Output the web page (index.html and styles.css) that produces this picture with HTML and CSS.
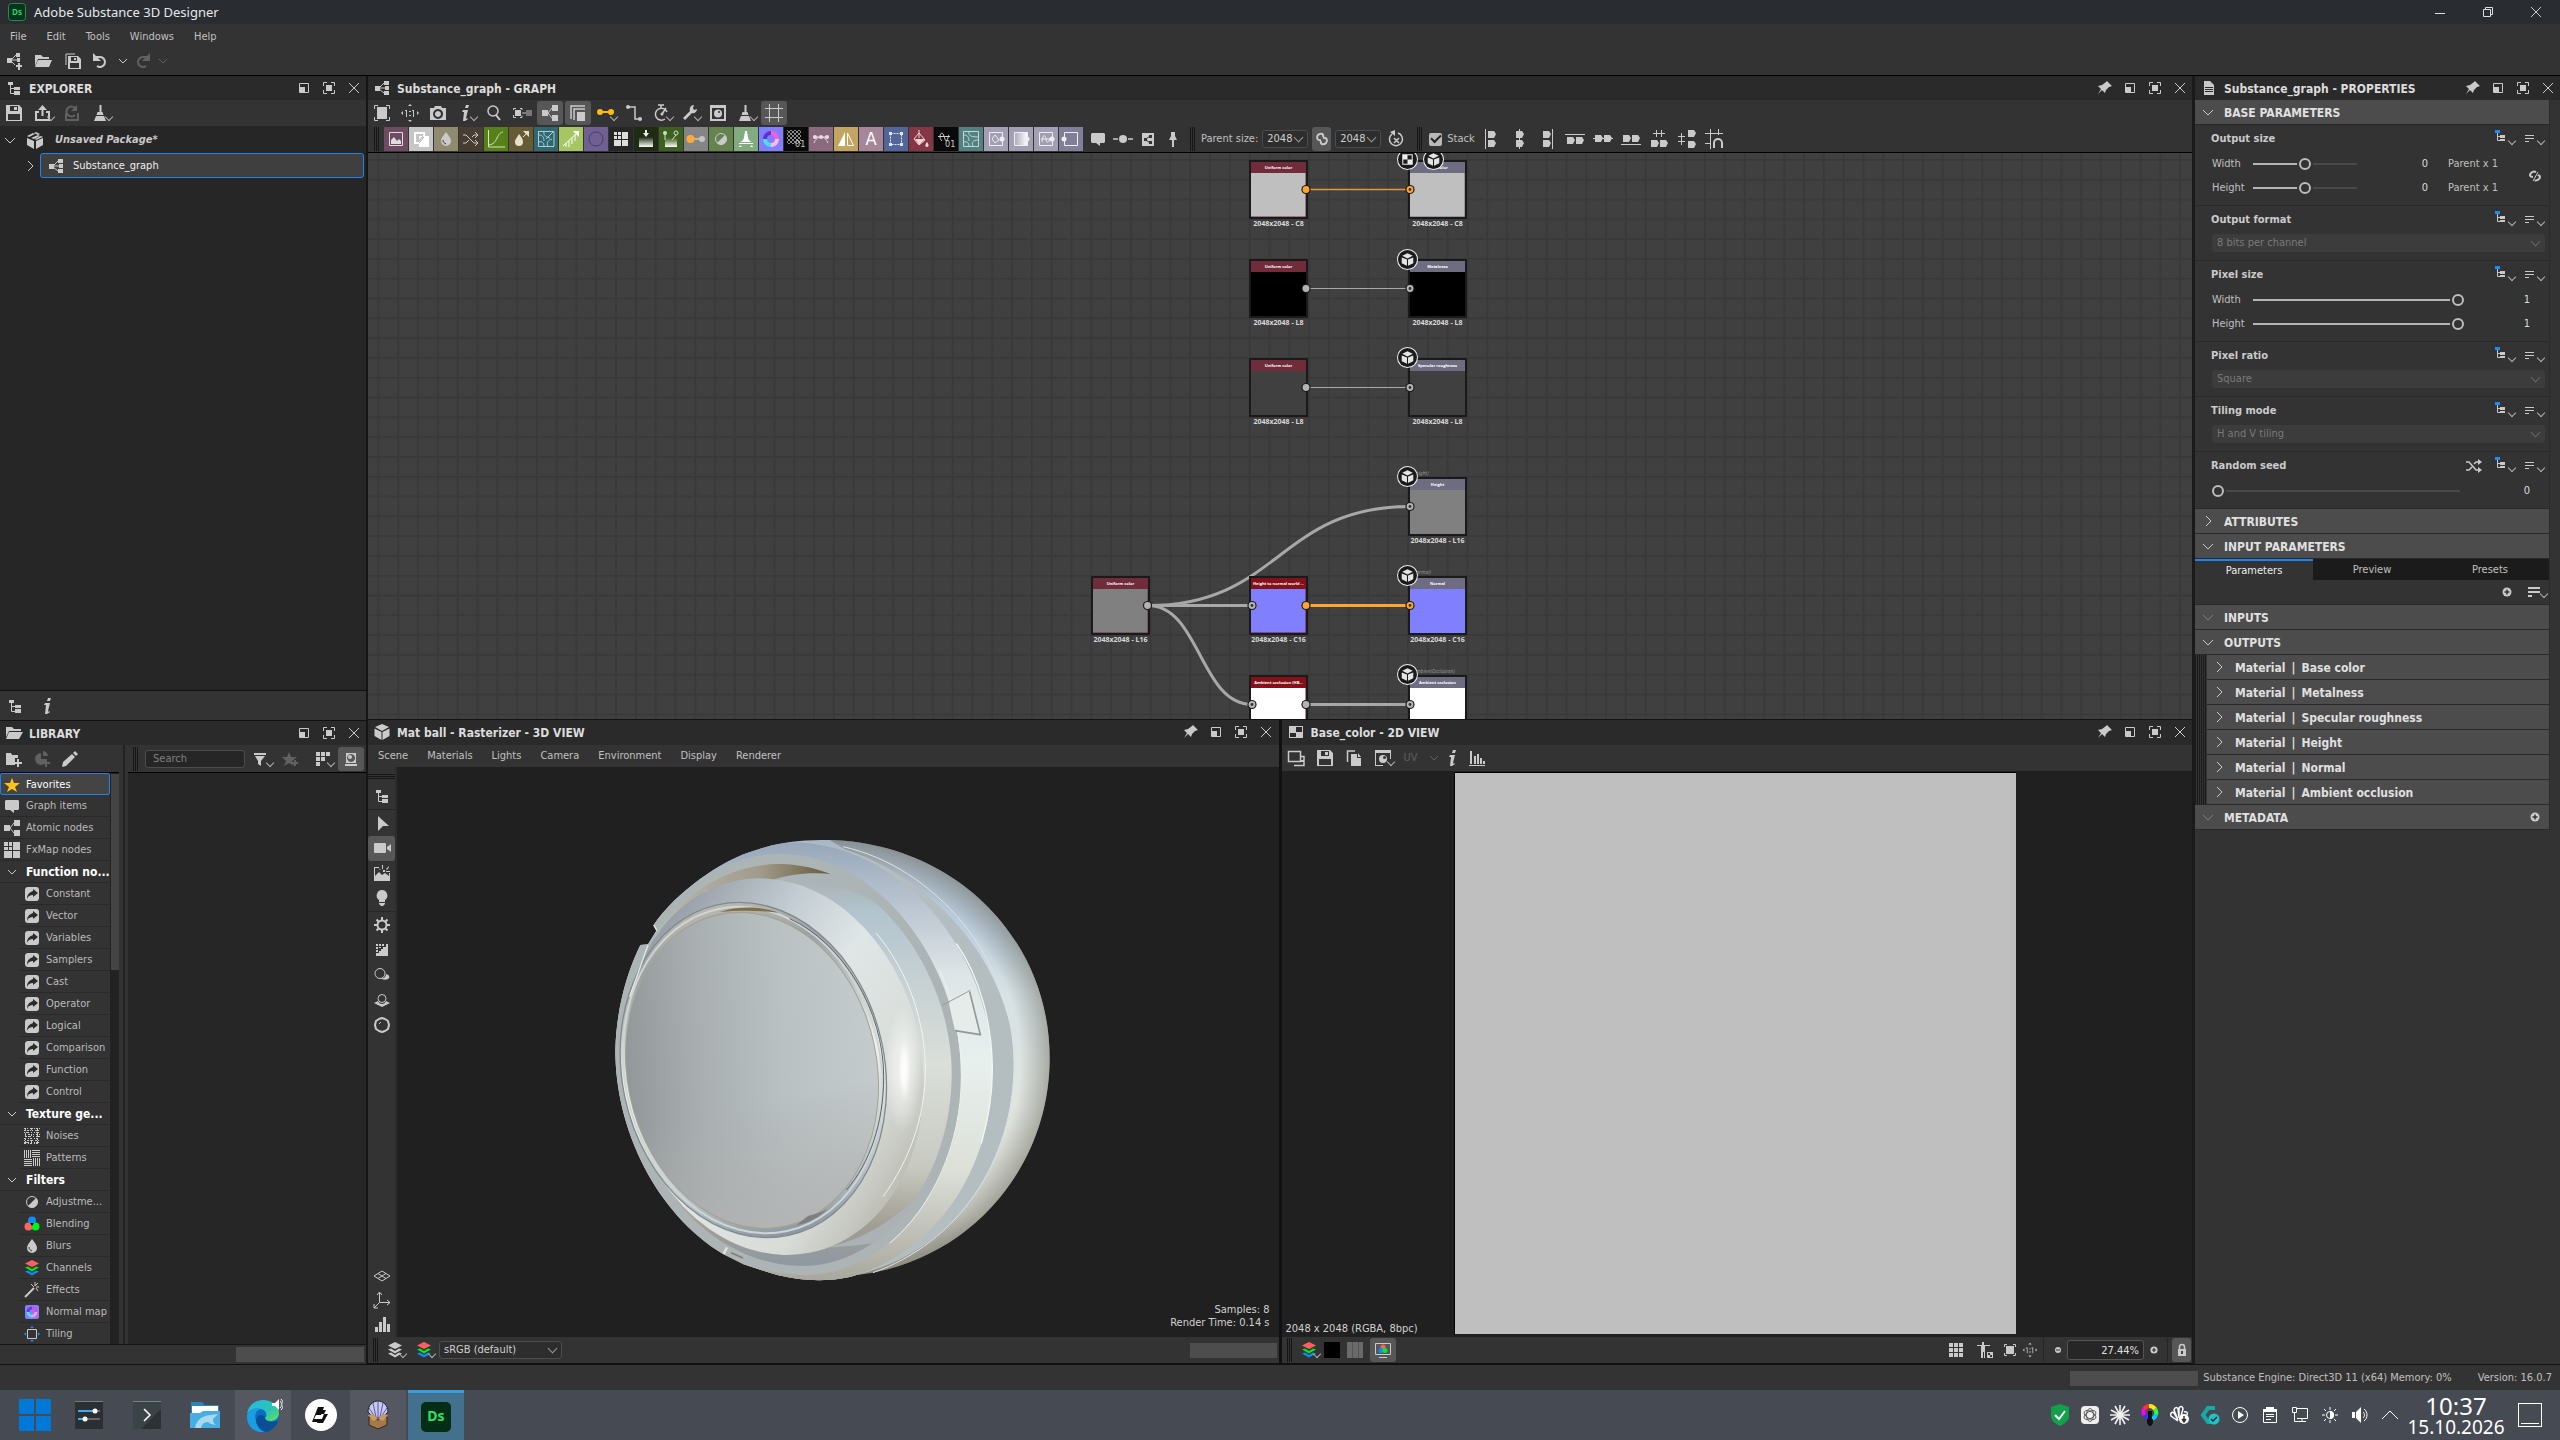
FILE: index.html
```html
<!DOCTYPE html>
<html lang="en">
<head>
<meta charset="utf-8">
<title>Adobe Substance 3D Designer</title>
<link rel="stylesheet" href="styles.css">
</head>
<body>
<svg class="sprite" aria-hidden="true">
  <defs>
    <linearGradient id="fade" x1="0" y1="0" x2="0" y2="1"><stop offset="0" stop-color="#fff" stop-opacity="0"/><stop offset="1" stop-color="#fff"/></linearGradient>
    <linearGradient id="fadeh" x1="0" y1="0" x2="1" y2="0"><stop offset="0" stop-color="#fff" stop-opacity=".1"/><stop offset="1" stop-color="#fff"/></linearGradient>
    <pattern id="check" width="4" height="4" patternUnits="userSpaceOnUse"><path fill="#8a8a8a" d="M0 0h2v2H0zM2 2h2v2H2z"/></pattern>
  </defs>
  <symbol id="graph" viewBox="0 0 20 20"><path fill="currentColor" d="M3 8h5v5H3zM12 3h5v4h-5zM13 8h4v4h-4zM12 13h5v4h-5z"/><path stroke="currentColor" fill="none" d="M7 10l5-5M7 10h6M7 11l5 4"/></symbol>
  <symbol id="graph3" viewBox="0 0 20 20"><path fill="currentColor" d="M2 7h6v6H2zM12 2h6v6h-6zM12 12h6v6h-6z"/><path stroke="currentColor" fill="none" d="M8 10l4-5M8 10l4 5"/></symbol>
  <symbol id="newgraph" viewBox="0 0 20 20"><path fill="currentColor" d="M2 7h5v5H2zM11 2h4v4h-4zM12 7h3v4h-3zM13 12h2v2h2v2h-2v3h-2v-3h-2v-2h2z"/><path stroke="currentColor" fill="none" d="M6 9l5-5M6 9h6M6 10l4 4"/></symbol>
  <symbol id="open" viewBox="0 0 20 20"><path fill="currentColor" d="M1 4h6l2 2h6v2H4l-3 7zM4 9h14l-3 7H1z"/></symbol>
  <symbol id="saveall" viewBox="0 0 20 20"><path fill="none" stroke="currentColor" d="M3 14V3h9"/><path fill="currentColor" fill-rule="evenodd" d="M5 5h10l3 3v10H5zM8 6v4h6V6zM11 7h2v2h-2zM7 12v5h9v-5z"/></symbol>
  <symbol id="save" viewBox="0 0 20 20"><path fill="currentColor" fill-rule="evenodd" d="M2 2h13l3 3v13H2zM6 3v5h8V3zM10 4h3v3h-3zM4 11v6h12v-6z"/></symbol>
  <symbol id="undo" viewBox="0 0 20 20"><path fill="none" stroke="currentColor" stroke-width="2" d="M6 6h4a5 5 0 1 1-3 9"/><path fill="currentColor" d="M3 2v8h8z"/></symbol>
  <symbol id="redo" viewBox="0 0 20 20"><path fill="none" stroke="currentColor" stroke-width="2" d="M14 6h-4a5 5 0 1 0 3 9"/><path fill="currentColor" d="M17 2v8H9z"/></symbol>
  <symbol id="chev" viewBox="0 0 20 20"><path fill="none" stroke="currentColor" d="M6 8l4 4 4-4"/></symbol>
  <symbol id="chevd" viewBox="0 0 20 20"><path fill="none" stroke="currentColor" d="M5 8l5 5 5-5"/></symbol>
  <symbol id="chevr" viewBox="0 0 20 20"><path fill="none" stroke="currentColor" d="M8 5l5 5-5 5"/></symbol>
  <symbol id="tree" viewBox="0 0 20 20"><path fill="currentColor" d="M4 4h5v3H4zM10 9h6v3h-6zM10 13h6v4h-6z"/><path fill="none" stroke="currentColor" d="M6.500 6v9.500H10M7 10.500h3"/></symbol>
  <symbol id="float" viewBox="0 0 20 20"><path fill="none" stroke="currentColor" d="M5.500 5.500h9v9h-9z"/><path fill="currentColor" d="M6 9h5v5H6z"/></symbol>
  <symbol id="max" viewBox="0 0 20 20"><path fill="none" stroke="currentColor" d="M4.500 8V4.500H8M12 4.500h3.500V8M15.500 12v3.500H12M8 15.500H4.500V12"/><path fill="currentColor" d="M7 7h6v6H7z"/></symbol>
  <symbol id="x" viewBox="0 0 20 20"><path fill="none" stroke="currentColor" d="M5 5l10 10M15 5L5 15"/></symbol>
  <symbol id="pin" viewBox="0 0 20 20"><path fill="currentColor" d="M12 3l5 5-3 1-3 3-1 3-3-3-4 4 3-5-3-3 4-1 4-3z"/></symbol>
  <symbol id="export" viewBox="0 0 20 20"><path fill="none" stroke="currentColor" stroke-width="2" d="M6 9H3v8h13V9h-3M9.500 13V4"/><path fill="currentColor" d="M5 7l4.500-5L14 7z"/></symbol>
  <symbol id="reload" viewBox="0 0 20 20"><path fill="none" stroke="currentColor" stroke-width="2" d="M4 10v7h12v-7M13 5a5 5 0 1 0 0 7"/><path fill="currentColor" d="M15 2v6H9z"/></symbol>
  <symbol id="broom" viewBox="0 0 20 20"><path fill="currentColor" d="M8.500 2h2v7h1l1 3h-7l1-3h2zM5 13h8l2 5H3z"/></symbol>
  <symbol id="package" viewBox="0 0 20 20"><path fill="currentColor" d="M2 8l7 3v8l-7-4zM11 11l7-3v7l-7 4zM2 6l6-3 2 1-6 3zM6 8l7-3 2 1-6 3zM10 9l6-3 2 1-7 3zM11 2l4 2-2 1-4-2z"/></symbol>
  <symbol id="fit" viewBox="0 0 20 20"><path fill="none" stroke="currentColor" d="M2.500 6V2.500H6M14 2.500h3.500V6M17.500 14v3.500H14M6 17.500H2.500V14"/><path fill="currentColor" d="M5 4h10v12H5z"/></symbol>
  <symbol id="fits" viewBox="0 0 20 20"><path fill="none" stroke="currentColor" d="M4.500 7V4.500H7M13 4.500h2.500V7M15.500 13v2.500H13M7 15.500H4.500V13"/><path fill="currentColor" d="M6 6h8v8H6z"/></symbol>
  <symbol id="one" viewBox="0 0 20 20"><path fill="currentColor" d="M10 1l2 2H8zM10 19l2-2H8zM1 10l2-2v4zM19 10l-2-2v4zM7 7v7H6V8H5V7zM14 7v7h-1V8h-1V7zM9 8h2v1H9zM9 12h2v1H9z"/></symbol>
  <symbol id="camera" viewBox="0 0 20 20"><path fill="currentColor" fill-rule="evenodd" d="M2 5h4l1-2h6l1 2h4v12H2zM10 6a5 5 0 1 0 .1 0zM10 8a3 3 0 1 1-.1 0z"/><circle cx="10" cy="11" r="2" fill="currentColor"/></symbol>
  <symbol id="info" viewBox="0 0 20 20"><path fill="currentColor" d="M10 2h3l-1 3H9zM7 7h5l-2 8 1 1 1-1v1l-3 2H7l1-9H6z"/></symbol>
  <symbol id="zoom" viewBox="0 0 20 20"><circle cx="9" cy="8" r="5" fill="none" stroke="currentColor" stroke-width="1.500"/><path stroke="currentColor" stroke-width="2" d="M12 12l4 5"/></symbol>
  <symbol id="frame" viewBox="0 0 20 20"><path fill="none" stroke="currentColor" d="M1.500 7V5.500H4M1.500 12v2.500H4M8 5.500h2V7M10 12.500v2H8M10 10h6"/><path fill="currentColor" d="M3 7h6v6H3z"/><path fill="#777" d="M14 7h6v6h-6z"/></symbol>
  <symbol id="stack" viewBox="0 0 20 20"><path fill="none" stroke="currentColor" stroke-width="1.500" d="M3 16V3h14M6 17V6h11"/><path fill="currentColor" d="M9 9h8v9H9z"/></symbol>
  <symbol id="link2" viewBox="0 0 20 20"><path stroke="#fdbb16" stroke-width="2" d="M4 9h12"/><circle cx="4" cy="9" r="3" fill="#fdbb16"/><circle cx="15" cy="9" r="3" fill="#fdbb16"/></symbol>
  <symbol id="route" viewBox="0 0 20 20"><path fill="none" stroke="currentColor" stroke-width="1.500" d="M4 4h7v12h5"/><circle cx="4" cy="4" r="2" fill="currentColor"/><circle cx="16" cy="16" r="2" fill="currentColor"/></symbol>
  <symbol id="timer" viewBox="0 0 20 20"><path fill="none" stroke="currentColor" stroke-width="1.500" d="M13 16a6 6 0 1 1 2-7M9 5V2M6 2h6M10 11l4-6"/><circle cx="10" cy="11" r="1.500" fill="currentColor"/></symbol>
  <symbol id="wrench" viewBox="0 0 20 20"><path fill="currentColor" d="M3 15l7-7c-1-3 1-6 4-6l-1 3 1 2 3-1c0 3-3 5-5 4l-7 7z"/></symbol>
  <symbol id="thumb" viewBox="0 0 20 20"><path fill="currentColor" fill-rule="evenodd" d="M2 2h16v16H2zM4 5v11h12V5z"/><circle cx="10" cy="10.500" r="4" fill="currentColor"/><circle cx="11" cy="9" r="1" fill="#333"/></symbol>
  <symbol id="snapgrid" viewBox="0 0 20 20"><path stroke="currentColor" d="M5.500 1v18M14.500 1v18M1 5.500h18M1 14.500h18"/></symbol>
  <symbol id="doc" viewBox="0 0 20 20"><path fill="currentColor" fill-rule="evenodd" d="M5 3h6l4 4v10H5zM6 9v1h8V9zM6 11v1h8v-1zM6 13v1h8v-1z"/></symbol>
  <symbol id="folder" viewBox="0 0 20 20"><path fill="currentColor" d="M2 4h6l2 2h7v2H5l-3 6zM5 9h14l-4 7H2z"/></symbol>
  <symbol id="addfolder" viewBox="0 0 20 20"><path fill="currentColor" d="M2 4h5l1 2h6v3h-3v7H2zM13 10h2v3h3v2h-3v3h-2v-3h-2v-2h2z"/></symbol>
  <symbol id="addfilter" viewBox="0 0 20 20"><path fill="currentColor" d="M9 4v6h6a6 6 0 1 1-6-6zM11 2a6 6 0 0 1 5 5h-5zM13 10h2v3h3v2h-3v3h-2v-3h-2v-2h2z"/></symbol>
  <symbol id="pencil" viewBox="0 0 20 20"><path fill="currentColor" d="M2 18l1-5 9-8 3 3-9 9zM13 4l2-2 3 3-2 2z"/></symbol>
  <symbol id="filter" viewBox="0 0 20 20"><path fill="currentColor" d="M2 4h12v2H2zM3 7h10l-4 5v5l-3-2v-3z"/></symbol>
  <symbol id="staradd" viewBox="0 0 20 20"><path fill="currentColor" d="M9 3l2 5h6l-5 4 2 5-5-3-5 3 2-5-4-4h5zM14 11h2v2h2v2h-2v2h-2v-2h-2v-2h2z"/></symbol>
  <symbol id="grid" viewBox="0 0 20 20"><path fill="currentColor" d="M3 3h4v4H3zM8 3h4v4H8zM13 3h4v4h-4zM3 8h4v4H3zM8 8h4v4H8zM13 8h4v4h-4zM3 13h4v4H3zM8 13h4v4H8zM13 13h4v4h-4z"/></symbol>
  <symbol id="gridd" viewBox="0 0 20 20"><path fill="currentColor" d="M3 3h4v4H3zM8 3h4v4H8zM13 3h4v4h-4zM3 8h4v4H3zM8 8h4v4H8zM3 13h4v4H3z"/></symbol>
  <symbol id="preview" viewBox="0 0 20 20"><path fill="currentColor" fill-rule="evenodd" d="M5 4h10v10H5zM10 5a4 4 0 1 0 .1 0z"/><circle cx="9" cy="8" r="2" fill="currentColor"/><path fill="currentColor" d="M4 15h12v2H4z"/></symbol>
  <symbol id="star" viewBox="0 0 20 20"><path fill="#ffc21a" d="M10 3l2 5h6l-5 4 2 5-5-3-5 3 2-5-5-4h6z"/></symbol>
  <symbol id="comment" viewBox="0 0 20 20"><path fill="currentColor" d="M4 4h12l1 1v8l-1 1h-4v3l-4-3H4l-1-1V5z"/></symbol>
  <symbol id="fx" viewBox="0 0 20 20"><path fill="currentColor" d="M2 2h4v4H2zM7 2h3v4H7zM2 7h4v3H2zM7 7h3v3H7zM11 2h7v8h-7zM2 11h8v7H2zM11 11h7v7h-7z"/></symbol>
  <symbol id="func" viewBox="0 0 20 20"><rect x="3" y="3" width="14" height="14" rx="3" fill="currentColor"/><path fill="#2b2b2b" d="M11 5l5 4-5 4v-2c-3 0-5 1-6 4 0-5 3-7 6-8z"/></symbol>
  <symbol id="noise" viewBox="0 0 20 20"><path fill="none" stroke="currentColor" stroke-dasharray="2 1 1 2 3 1 1 1" d="M2 2.500h16"/><path fill="none" stroke="currentColor" stroke-dasharray="1 2 2 1 1 1" d="M2 4.500h16M3 8.500h15M2 14.500h16"/><path fill="none" stroke="currentColor" stroke-dasharray="1 1 3 2 1 2" d="M2 6.500h16M4 10.500h14M2 16.500h16"/><path fill="none" stroke="currentColor" stroke-dasharray="2 2 1 1" d="M2 12.500h16M2 17.500h16M3.500 3v14M9.500 2v15M15.500 3v15"/></symbol>
  <symbol id="pattern" viewBox="0 0 20 20"><path stroke="currentColor" fill="none" d="M2.500 2v8M4.500 2v8M6.500 2v8M8.500 2v8M10 2.500h8M10 4.500h8M10 6.500h8M10 8.500h8M2 11.500h8M2 13.500h8M2 15.500h8M2 17.500h8M11.500 10v8M13.500 10v8M15.500 10v8M17.500 10v8"/></symbol>
  <symbol id="adjust" viewBox="0 0 20 20"><circle cx="10" cy="10" r="5.500" fill="none" stroke="currentColor"/><path fill="currentColor" d="M14 6a5.600 5.600 0 0 1-8 8z"/></symbol>
  <symbol id="blend" viewBox="0 0 20 20"><circle cx="10" cy="6.500" r="4" fill="#0e8cff"/><circle cx="6.500" cy="12.500" r="4" fill="#ff6464"/><circle cx="13.500" cy="12.500" r="4" fill="#00f21a"/><path fill="#111" d="M8 9h4l-2 3z"/></symbol>
  <symbol id="drop" viewBox="0 0 20 20"><path fill="currentColor" d="M10 3c3 4 5 6 5 9a5 5 0 0 1-10 0c0-3 2-5 5-9z"/><path fill="none" stroke="#333" d="M7 11c0 2 1 3 3 4"/></symbol>
  <symbol id="rgb" viewBox="0 0 20 20"><path fill="#ff5f5f" d="M10 2l7 3.500L10 9 3 5.500z"/><path fill="#00e81c" d="M3 9.500l3-1L10 11l4-2.500 3 1-7 4z"/><path fill="#0e8cff" d="M3 13.500l3-1 4 2.500 4-2.500 3 1-7 4z"/></symbol>
  <symbol id="layers" viewBox="0 0 20 20"><path fill="currentColor" d="M10 2l7 3.500L10 9 3 5.500zM3 9.500l3-1L10 11l4-2.500 3 1-7 4zM3 13.500l3-1 4 2.500 4-2.500 3 1-7 4z"/></symbol>
  <symbol id="wand" viewBox="0 0 20 20"><path stroke="currentColor" stroke-width="2" d="M3 17l9-9"/><path stroke="currentColor" d="M13 2v4M17 7h-3M9 4l3 3M16 3l-3 3M16 11l-2-3"/></symbol>
  <symbol id="normal" viewBox="0 0 20 20"><rect x="3" y="3" width="14" height="14" rx="2" fill="#8080ff"/><path fill="none" stroke-width="3" stroke="#e04ad8" d="M10 6a4 4 0 0 1 4 4"/><path fill="none" stroke-width="3" stroke="#ff9ad0" d="M14 10a4 4 0 0 1-4 4"/><path fill="none" stroke-width="3" stroke="#5ad8f0" d="M10 14a4 4 0 0 1-4-4"/><path fill="none" stroke-width="3" stroke="#6a3be0" d="M6 10a4 4 0 0 1 4-4"/></symbol>
  <symbol id="tiling" viewBox="0 0 20 20"><path fill="none" stroke="currentColor" d="M5.500 5.500h9v9h-9z"/><path fill="#0e8cff" d="M10 2l2 2H8zM10 18l2-2H8zM2 10l2-2v4zM18 10l-2-2v4z"/></symbol>
  <symbol id="cursor" viewBox="0 0 20 20"><path fill="currentColor" d="M6 3l11 10H11l-5 5z"/></symbol>
  <symbol id="video" viewBox="0 0 20 20"><rect x="2" y="5" width="12" height="10" rx="1" fill="currentColor"/><path fill="currentColor" d="M15 9l4-3v8l-4-3z"/></symbol>
  <symbol id="env" viewBox="0 0 20 20"><path fill="currentColor" d="M2 4h5v1H3v8l4-4 3 3 3-2 4 3v-3h1v8H2zM13 7h-2v2h2zM10 2h1v4h-1zM14 6l3-3v1l-2 3zM14 8h4v1h-4zM6 5l3 2H8z"/></symbol>
  <symbol id="bulb" viewBox="0 0 20 20"><path fill="currentColor" d="M10 2a5.500 5.500 0 0 1 3 10v2H7v-2a5.500 5.500 0 0 1 3-10zM7 15h6v1l-2 2H9l-2-2z"/></symbol>
  <symbol id="gear" viewBox="0 0 20 20"><circle cx="10" cy="10" r="4.500" fill="none" stroke="currentColor" stroke-width="2"/><path stroke="currentColor" stroke-width="2" d="M10 2v3M10 15v3M2 10h3M15 10h3M4.500 4.500l2 2M13.500 13.500l2 2M15.500 4.500l-2 2M6.500 13.500l-2 2"/></symbol>
  <symbol id="curve" viewBox="0 0 20 20"><path fill="currentColor" d="M16 4v12H4v-3h3v-2h2V9h2V7h3V4zM4 4h2v2H4zM7 4h2v2H7zM10 4h2v2h-2zM4 7h2v2H4zM7 7h2v1H7zM4 10h2v2H4z"/></symbol>
  <symbol id="shadow" viewBox="0 0 20 20"><path fill="currentColor" d="M14 9c4 1 4 4 2 5s-6 1-8-1c4 1 6-1 6-4z"/><circle cx="8" cy="8.500" r="5" fill="none" stroke="currentColor"/></symbol>
  <symbol id="ground" viewBox="0 0 20 20"><path fill="currentColor" d="M2 13l4-2c1 4 7 4 8 0l4 2-8 4z"/><circle cx="10" cy="8.500" r="4" fill="none" stroke="currentColor"/></symbol>
  <symbol id="octo" viewBox="0 0 20 20"><path fill="none" stroke="currentColor" stroke-width="2" stroke-linejoin="round" d="M7 4l3-1 3 1 3 2 1 4-1 4-3 2-3 1-3-1-3-2-1-4 1-4z"/><path fill="none" stroke="currentColor" d="M7 9l2-2"/></symbol>
  <symbol id="plane" viewBox="0 0 20 20"><path fill="none" stroke="currentColor" d="M10 5l8 5-8 5-8-5zM6 7.500l8 5M14 7.500l-8 5"/></symbol>
  <symbol id="axis" viewBox="0 0 20 20"><path fill="none" stroke="currentColor" d="M7.500 3v9.500H18M7 13l-5 5M5 5l2.500-3L10 5M15 10l3 2.500-3 2.500M2 14v4h4"/></symbol>
  <symbol id="bars" viewBox="0 0 20 20"><path fill="currentColor" d="M3 13h3v5H3zM7 8h3v10H7zM11 3h3v15h-3zM15 10h3v8h-3z"/></symbol>
  <symbol id="hist" viewBox="0 0 20 20"><path fill="currentColor" d="M2 17h16v1H2zM3 3h2v13H3zM7 8h2v8H7zM10 6h2v10h-2zM13 10h2v6h-2zM16 13h2v3h-2z"/></symbol>
  <symbol id="copywin" viewBox="0 0 20 20"><path fill="none" stroke="currentColor" stroke-width="1.500" d="M2.500 3.500h12v10h-12zM8 17.500h10v-9h-3"/><path fill="currentColor" d="M14 12h4v2h-4z"/></symbol>
  <symbol id="copy" viewBox="0 0 20 20"><path fill="none" stroke="currentColor" stroke-width="1.500" d="M3.500 14V3H11"/><path fill="currentColor" d="M7 6h6v4h4v8H7zM14 5l3 4h-3z"/></symbol>
  <symbol id="viewimg" viewBox="0 0 20 20"><path fill="currentColor" fill-rule="evenodd" d="M2 2h16v9h-1V5H3v12h7v1H2z"/><circle cx="10" cy="11" r="4" fill="currentColor"/><circle cx="11.500" cy="9.500" r="1.500" fill="#333"/></symbol>
  <symbol id="cube" viewBox="0 0 20 20"><path fill="currentColor" d="M10 2l7 3-7 4-7-4zM2.500 6.500L9.500 10v8l-7-4zM17.500 6.500L10.500 10v8l7-4z"/></symbol>
  <symbol id="checker" viewBox="0 0 20 20"><path fill="currentColor" fill-rule="evenodd" d="M3 4h14v12H3zM10 5v5h6V5zM4 11v4h6v-4z"/></symbol>
  <symbol id="person" viewBox="0 0 20 20"><path fill="currentColor" d="M7 2h2v3h6v1h-5v12H9v-6H8v6H6V6H2V5h5zM12 12h6v6h-6z"/><path fill="#333" d="M13 13h2v2h-2zM15 15h2v2h-2z"/></symbol>
  <symbol id="lock" viewBox="0 0 20 20"><path fill="none" stroke="currentColor" stroke-width="1.500" d="M7.500 9V7a2.500 2.500 0 0 1 5 0v2"/><path fill="currentColor" d="M6 9h8v7H6z"/><path fill="#444" d="M9 11h2v3H9z"/></symbol>
  <symbol id="plus" viewBox="0 0 20 20"><circle cx="10" cy="10" r="4.500" fill="currentColor"/><path stroke="#333" stroke-width="1.500" d="M7.500 10h5M10 7.500v5"/></symbol>
  <symbol id="minus" viewBox="0 0 20 20"><circle cx="10" cy="10" r="3" fill="currentColor"/><path stroke="#333" d="M8 10h4"/></symbol>
  <symbol id="monitor" viewBox="0 0 20 20"><path fill="none" stroke="currentColor" d="M2.500 3.500h15v11h-15zM6 17.500h8"/><circle cx="10" cy="7" r="2.500" fill="#ff6464"/><circle cx="8" cy="10.500" r="2.500" fill="#0e8cff"/><circle cx="12" cy="10.500" r="2.500" fill="#00f21a"/></symbol>
  <symbol id="inherit" viewBox="0 0 20 20"><path fill="#1b8cff" d="M2 1h5v3H2z"/><path fill="none" stroke="currentColor" d="M4.500 4v7.500H7M5 7.500h3"/><path fill="currentColor" d="M7 6h5v3H7zM7 10h5v2H7z"/></symbol>
  <symbol id="menu" viewBox="0 0 20 20"><path stroke="currentColor" d="M3 6.500h9M3 9.500h9M3 12.500h4"/></symbol>
  <symbol id="menub" viewBox="0 0 20 20"><path stroke="currentColor" stroke-width="2" d="M3 6h12M3 10h12M3 14h4"/></symbol>
  <symbol id="chain" viewBox="0 0 20 20"><path fill="none" stroke="currentColor" stroke-width="2" d="M9 11c-4 1-5-3-3-5s6-2 5 2M11 9c4-1 5 3 3 5s-6 2-5-2"/></symbol>
  <symbol id="unchain" viewBox="0 0 20 20"><path fill="none" stroke="currentColor" stroke-width="2" d="M8 11c-3 0-4-2-2-4s5-2 5 0M12 9c3 0 4 2 2 4s-5 2-5 0"/><path stroke="#333" stroke-width="3" d="M7 16l7-12"/><path stroke="currentColor" d="M8 15l5-9"/></symbol>
  <symbol id="shuffle" viewBox="0 0 20 20"><path fill="none" stroke="currentColor" stroke-width="1.500" d="M2 6h3l7 8h4M2 14h3l3-3M10 8l2-2h4"/><path fill="currentColor" d="M14 3l4 3-4 3zM14 11l4 3-4 3z"/></symbol>
  <symbol id="dot" viewBox="0 0 20 20"><circle cx="10" cy="10" r="4" fill="currentColor"/><path stroke="currentColor" stroke-width="1.500" d="M0 10h5M15 10h5"/></symbol>
  <symbol id="sub" viewBox="0 0 20 20"><path fill="currentColor" d="M4 4h12v13H4z"/><path fill="#333" d="M6 9h3v3H6zM11 6h3v3h-3zM11 12h3v3h-3z"/><path stroke="#333" d="M8 10l4-3M8 11l4 3"/></symbol>
  <symbol id="nail" viewBox="0 0 20 20"><path fill="currentColor" d="M8 3h4v4l2 4h-3v7h-2v-7H6l2-4z"/></symbol>
  <symbol id="resetx" viewBox="0 0 20 20"><path fill="none" stroke="currentColor" stroke-width="1.500" d="M6 5a6.500 6.500 0 1 0 6-1M8 9l5 5M13 9l-5 5"/><path fill="currentColor" d="M4 3l5-2v6z"/></symbol>
  <symbol id="a1" viewBox="0 0 20 20"><path stroke="currentColor" d="M4.500 0v20"/><path fill="currentColor" d="M7 2h6l2 3-2 4H7zM7 11h6l2 3-2 4H7z"/></symbol>
  <symbol id="a2" viewBox="0 0 20 20"><path stroke="currentColor" d="M10.500 0v20"/><path fill="currentColor" d="M7 2h6l2 3-2 4H7zM7 11h6l2 3-2 4H7z"/></symbol>
  <symbol id="a3" viewBox="0 0 20 20"><path stroke="currentColor" d="M15.500 0v20"/><path fill="currentColor" d="M6 2h6l2 3-2 4H6zM6 11h6l2 3-2 4H6z"/></symbol>
  <symbol id="a4" viewBox="0 0 20 20"><path stroke="currentColor" d="M0 5.500h20"/><path fill="currentColor" d="M2 8h6l2 3-2 4H2zM11 8h6l2 3-2 4h-6z"/></symbol>
  <symbol id="a5" viewBox="0 0 20 20"><path stroke="currentColor" d="M0 9.500h20"/><path fill="currentColor" d="M2 6h6l2 3-2 4H2zM11 6h6l2 3-2 4h-6z"/></symbol>
  <symbol id="a6" viewBox="0 0 20 20"><path stroke="currentColor" d="M0 15.500h20"/><path fill="currentColor" d="M2 6h6l2 3-2 4H2zM11 6h6l2 3-2 4h-6z"/></symbol>
  <symbol id="a7" viewBox="0 0 20 20"><path stroke="currentColor" d="M4 4.500h12M7.500 1v7M12.500 1v7"/><path fill="currentColor" d="M2 11h6l2 3-2 4H2zM11 11h6l2 3-2 4h-6z"/></symbol>
  <symbol id="a8" viewBox="0 0 20 20"><path stroke="currentColor" d="M4.500 4v12M1 7.500h7M1 12.500h7"/><path fill="currentColor" d="M11 1h6l2 3-2 4h-6zM11 12h6l2 3-2 4h-6z"/></symbol>
  <symbol id="a9" viewBox="0 0 20 20"><path stroke="currentColor" d="M5.500 0v20M0 4.500h18M13.500 0v6M0 14.500h5"/><path fill="none" stroke="currentColor" stroke-width="2" d="M9 19v-5a4 4 0 0 1 8 0v5"/></symbol>
  <symbol id="box" viewBox="0 0 20 20"><circle cx="10" cy="10" r="10" fill="#eee"/><circle cx="10" cy="10" r="9" fill="#1a1a1a"/><path fill="#e4e4e4" d="M10 4l5 2.500L10 9 5 6.500zM4.500 8L9.500 10v6l-5-2.500zM15.500 8l-5 2v6l5-2.500z"/></symbol>
  <symbol id="chk" viewBox="0 0 20 20"><circle cx="10" cy="10" r="10" fill="#eee"/><circle cx="10" cy="10" r="9" fill="#1a1a1a"/><path fill="#eee" d="M5 5h10v10H5z"/><path fill="#1a1a1a" d="M10 6h4v4h-4zM6 10h4v4H6z"/></symbol>
</svg>

<header class="titlebar">
  <svg class="applogo" viewBox="0 0 18 18"><rect x=".5" y=".5" width="17" height="17" rx="3" fill="#06341d" stroke="#2a8a4c"/><text x="9" y="12" text-anchor="middle" class="ds-s">Ds</text></svg>
  <h1>Adobe Substance 3D Designer</h1>
  <div class="winbtns">
    <button aria-label="Minimize"><svg class="i"><path stroke="#ddd" d="M5 11.500h10"/></svg></button>
    <button aria-label="Restore"><svg class="i"><path fill="none" stroke="#ddd" d="M5.500 7.500h7v7h-7zM7.500 7v-1.500h7v7H13"/></svg></button>
    <button aria-label="Close"><svg class="i"><use href="#x"/></svg></button>
  </div>
</header>
<nav class="menu appmenu"><a href="#">File</a><a href="#">Edit</a><a href="#">Tools</a><a href="#">Windows</a><a href="#">Help</a></nav>
<div class="maintools">
  <button class="ib"><svg class="i"><use href="#newgraph"/></svg></button>
  <button class="ib"><svg class="i"><use href="#open"/></svg></button>
  <button class="ib"><svg class="i"><use href="#saveall"/></svg></button>
  <button class="ib narrow"><svg class="i"><use href="#undo"/></svg></button>
  <button class="ib slim"><svg class="i"><use href="#chev"/></svg></button>
  <button class="ib slim off"><svg class="i"><use href="#redo"/></svg></button>
  <button class="ib slim off"><svg class="i"><use href="#chev"/></svg></button>
</div>

<main class="work">
  <div class="left">
    <section class="panel explorer">
      <div class="phead"><svg class="i"><use href="#tree"/></svg><h2>EXPLORER</h2><button class="hb"><svg class="i"><use href="#float"/></svg></button><button class="hb"><svg class="i"><use href="#max"/></svg></button><button class="hb"><svg class="i"><use href="#x"/></svg></button></div>
      <div class="tb wide">
        <button class="ib"><svg class="i"><use href="#save"/></svg></button><button class="ib dd"><svg class="i"><use href="#export"/></svg></button><button class="ib off"><svg class="i"><use href="#reload"/></svg></button><button class="ib dd"><svg class="i"><use href="#broom"/></svg></button>
      </div>
      <div class="pkgtree">
        <div class="pkg"><svg class="i"><use href="#chevd"/></svg><svg class="i big"><use href="#package"/></svg><em>Unsaved Package*</em></div>
        <div class="child"><svg class="i"><use href="#chevr"/></svg><div class="sel"><svg class="i"><use href="#graph"/></svg><span>Substance_graph</span></div></div>
      </div>
      <div class="tb foot"><button class="ib"><svg class="i"><use href="#tree"/></svg></button><button class="ib"><svg class="i"><use href="#info"/></svg></button></div>
    </section>
    <section class="panel library">
      <div class="phead"><svg class="i"><use href="#folder"/></svg><h2>LIBRARY</h2><button class="hb"><svg class="i"><use href="#float"/></svg></button><button class="hb"><svg class="i"><use href="#max"/></svg></button><button class="hb"><svg class="i"><use href="#x"/></svg></button></div>
      <div class="libcols">
        <div class="libnav">
          <div class="tb"><button class="ib"><svg class="i"><use href="#addfolder"/></svg></button><button class="ib off"><svg class="i"><use href="#addfilter"/></svg></button><button class="ib"><svg class="i"><use href="#pencil"/></svg></button></div>
          <div class="listwrap">
            <ul>
              <li class="on"><svg class="i"><use href="#star"/></svg><span>Favorites</span></li>
              <li><svg class="i"><use href="#comment"/></svg><span>Graph items</span></li>
              <li><svg class="i"><use href="#graph3"/></svg><span>Atomic nodes</span></li>
              <li><svg class="i"><use href="#fx"/></svg><span>FxMap nodes</span></li>
              <li class="cat"><svg class="i"><use href="#chev"/></svg><span>Function no...</span></li>
              <li class="s"><svg class="i"><use href="#func"/></svg><span>Constant</span></li>
              <li class="s"><svg class="i"><use href="#func"/></svg><span>Vector</span></li>
              <li class="s"><svg class="i"><use href="#func"/></svg><span>Variables</span></li>
              <li class="s"><svg class="i"><use href="#func"/></svg><span>Samplers</span></li>
              <li class="s"><svg class="i"><use href="#func"/></svg><span>Cast</span></li>
              <li class="s"><svg class="i"><use href="#func"/></svg><span>Operator</span></li>
              <li class="s"><svg class="i"><use href="#func"/></svg><span>Logical</span></li>
              <li class="s"><svg class="i"><use href="#func"/></svg><span>Comparison</span></li>
              <li class="s"><svg class="i"><use href="#func"/></svg><span>Function</span></li>
              <li class="s"><svg class="i"><use href="#func"/></svg><span>Control</span></li>
              <li class="cat"><svg class="i"><use href="#chev"/></svg><span>Texture ge...</span></li>
              <li class="s"><svg class="i"><use href="#noise"/></svg><span>Noises</span></li>
              <li class="s"><svg class="i"><use href="#pattern"/></svg><span>Patterns</span></li>
              <li class="cat"><svg class="i"><use href="#chev"/></svg><span>Filters</span></li>
              <li class="s"><svg class="i"><use href="#adjust"/></svg><span>Adjustme...</span></li>
              <li class="s"><svg class="i"><use href="#blend"/></svg><span>Blending</span></li>
              <li class="s"><svg class="i"><use href="#drop"/></svg><span>Blurs</span></li>
              <li class="s"><svg class="i"><use href="#rgb"/></svg><span>Channels</span></li>
              <li class="s"><svg class="i"><use href="#wand"/></svg><span>Effects</span></li>
              <li class="s"><svg class="i"><use href="#normal"/></svg><span>Normal map</span></li>
              <li class="s"><svg class="i"><use href="#tiling"/></svg><span>Tiling</span></li>
            </ul>
            <div class="vscroll"><i></i></div>
          </div>
        </div>
        <div class="splitter"></div>
        <div class="libmain">
          <div class="tb"><span class="grip"></span><input class="search" type="text" placeholder="Search" aria-label="Search"><button class="ib dd"><svg class="i"><use href="#filter"/></svg></button><button class="ib off"><svg class="i"><use href="#staradd"/></svg></button><button class="ib dd end"><svg class="i"><use href="#gridd"/></svg></button><button class="ib act"><svg class="i"><use href="#preview"/></svg></button></div>
          <div class="libempty"></div>
        </div>
      </div>
      <div class="libfoot"><div class="prog"></div></div>
    </section>
  </div>

  <div class="mid">
    <section class="panel graphp">
      <div class="phead"><svg class="i"><use href="#graph"/></svg><h2>Substance_graph - GRAPH</h2><button class="hb"><svg class="i"><use href="#pin"/></svg></button><button class="hb"><svg class="i"><use href="#float"/></svg></button><button class="hb"><svg class="i"><use href="#max"/></svg></button><button class="hb"><svg class="i"><use href="#x"/></svg></button></div>
      <div class="tb">
        <button class="ib"><svg class="i"><use href="#fit"/></svg></button><button class="ib"><svg class="i"><use href="#one"/></svg></button><button class="ib"><svg class="i"><use href="#camera"/></svg></button><button class="ib dd"><svg class="i"><use href="#info"/></svg></button><button class="ib"><svg class="i"><use href="#zoom"/></svg></button><button class="ib"><svg class="i"><use href="#frame"/></svg></button><button class="ib act"><svg class="i"><use href="#graph3"/></svg></button><button class="ib act"><svg class="i"><use href="#stack"/></svg></button><button class="ib dd"><svg class="i"><use href="#link2"/></svg></button><button class="ib"><svg class="i"><use href="#route"/></svg></button><button class="ib dd"><svg class="i"><use href="#timer"/></svg></button><button class="ib dd"><svg class="i"><use href="#wrench"/></svg></button><button class="ib"><svg class="i"><use href="#thumb"/></svg></button><button class="ib dd"><svg class="i"><use href="#broom"/></svg></button><button class="ib act"><svg class="i"><use href="#snapgrid"/></svg></button>
      </div>
      <div class="tb nodesbar">
        <span class="grip"></span>
        <div class="tiles">
          <button class="t c1"><svg class="i"><path fill="none" stroke="#ddd" d="M3.500 3.500h13v13h-13z"/><path fill="#ddd" d="M5 15V11l3-3 3 4 2-2 2 2v3z"/></svg></button>
          <button class="t c2"><svg class="i"><path fill="none" stroke="#fff" stroke-width="2" d="M4 4h9v10H4z"/><path fill="#fff" d="M8 7h10v11H8z"/><path stroke="#aaa" d="M8 12l4-5M8 14l5-6"/></svg></button>
          <button class="t c3"><svg class="i"><use href="#drop"/></svg></button>
          <button class="t c4"><svg class="i"><path fill="none" stroke="#ccc" d="M2 6h3l8 8h4M2 14h3l3-3M11 8l2-2h4M14 3l3 3-3 3M14 11l3 3-3 3"/></svg></button>
          <button class="t c5"><svg class="i"><path fill="none" stroke="#d8e8b8" d="M2.500 1v17H19M3 16c5-1 6-3 8-7s4-6 6-6"/></svg></button>
          <button class="t c6"><svg class="i"><path fill="#e8e0c8" d="M8 5c3 4 4 5 4 8a4 4 0 0 1-8 0c0-3 2-4 4-8zM12 2h6v6z"/><path stroke="#e8e0c8" d="M12 8l5-5"/></svg></button>
          <button class="t c7"><svg class="i"><path fill="none" stroke="#9fd4dc" d="M2 2.500h16v15H2.500V2M3 6c4 0 5 3 5 6M8 3c-1 4 3 5 6 6M12 17c-2-3 0-6 4-7M3 13c3-1 5 1 5 4M10 10l7-7"/></svg></button>
          <button class="t c8"><svg class="i"><path stroke="#fff" d="M2 17L17 3M5 18v-4M8 18v-6M11 15v-6M14 12V6"/><path fill="#fff" d="M12 2h6v6z"/></svg></button>
          <button class="t c9"><svg class="i"><circle cx="10" cy="10" r="7" fill="none" stroke="#453b78"/></svg></button>
          <button class="t c10"><svg class="i"><path fill="#ddd" d="M3 3h3v3H3zM7 3h3v3H7zM3 7h3v3H3zM7 7h3v3H7zM11 3h6v7h-6zM3 11h7v6H3zM11 11h6v6h-6z"/></svg></button>
          <button class="t c11"><svg class="i"><path fill="url(#fade)" d="M3 8h14v10H3z"/><path fill="#eee" d="M9 1h2v3h2l-3 4-3-4h2z"/></svg></button>
          <button class="t c12"><svg class="i"><path fill="url(#fade)" d="M4 9h12v9H4z"/><circle cx="4" cy="4" r="2" fill="#cfe0c0"/><circle cx="15" cy="4" r="2" fill="none" stroke="#cfe0c0"/><path stroke="#cfe0c0" d="M4 5v6M15 6l-4 5"/></svg></button>
          <button class="t c13"><svg class="i"><path stroke="#c8b090" stroke-width="2" d="M5 10h10"/><circle cx="4.500" cy="10" r="4" fill="#ffab3c"/><circle cx="16" cy="10" r="3" fill="#c4c4c4"/></svg></button>
          <button class="t c14"><svg class="i"><use href="#adjust"/></svg></button>
          <button class="t c15"><svg class="i"><path fill="#fff" d="M3 14h14v1H3zM4 13c4-1 4-4 5-11h2c1 7 1 10 5 11zM4 16l2 2H3zM16 16l1 2h-3z"/></svg></button>
          <button class="t c16"><svg class="i"><path fill="none" stroke-width="4" stroke="#ff5ad8" d="M10 4a6 6 0 0 1 6 6"/><path fill="none" stroke-width="4" stroke="#ffb8e0" d="M16 10a6 6 0 0 1-6 6"/><path fill="none" stroke-width="4" stroke="#48e0e8" d="M10 16a6 6 0 0 1-6-6"/><path fill="none" stroke-width="4" stroke="#6030d0" d="M4 10a6 6 0 0 1 6-6"/></svg></button>
          <button class="t c17"><svg class="i"><path fill="url(#check)" d="M1 1h14v14H1z"/><text x="9" y="18" class="t01">01</text></svg></button>
          <button class="t c18"><svg class="i"><path fill="none" stroke="#e8dce4" d="M2 8h16M3 14c3-8 11-8 14 0"/><circle cx="4" cy="8" r="2" fill="#e8dce4"/><circle cx="10" cy="8" r="2" fill="#e8dce4"/><circle cx="16" cy="8" r="2" fill="#e8dce4"/></svg></button>
          <button class="t c19"><svg class="i"><path fill="#fff" d="M9 3v14H2z"/><path fill="none" stroke="#fff" d="M11.500 4v12.500h6z"/></svg></button>
          <button class="t c20">A</button>
          <button class="t c21"><svg class="i"><path fill="none" stroke="#dfe6ff" stroke-dasharray="2 1" d="M4.500 4.500h11v11h-11z"/><path fill="#dfe6ff" d="M3 3h3v3H3zM14 3h3v3h-3zM3 14h3v3H3zM14 14h3v3h-3z"/></svg></button>
          <button class="t c22"><svg class="i"><path fill="none" stroke="#f0d4d8" d="M8 4l6 7-6 5-5-6zM8 1v8"/><path fill="#f0d4d8" d="M4 10h10l-6 6zM16 13c3 4 1 5 0 5s-3-1 0-5z"/></svg></button>
          <button class="t c23"><svg class="i"><path fill="none" stroke="#ccc" d="M2 7.500h12M6 12C2 8 5 2 7 5s2 9 4 6 1-5 2-5"/><text x="9" y="18" class="t01">01</text></svg></button>
          <button class="t c24"><svg class="i"><path fill="none" stroke="#b8dcdc" d="M2.500 2.500h15v15h-15zM3 6c4 0 5 3 5 6M8 3c-1 4 3 5 9 5M12 17c-2-3 0-6 5-6M3 13c3-1 5 1 5 4"/></svg></button>
          <button class="t c25"><svg class="i"><path fill="none" stroke="#eee" d="M3.500 3.500h13v13h-13zM9 6l4 5-4 3-3-4z"/><circle cx="16" cy="10" r="2.500" fill="#eee"/></svg></button>
          <button class="t c25"><svg class="i"><path fill="url(#fadeh)" stroke="#eee" d="M3.500 3.500h13v13h-13z"/><circle cx="16" cy="10" r="2.500" fill="#eee"/></svg></button>
          <button class="t c25"><svg class="i"><path fill="none" stroke="#eee" d="M3.500 3.500h13v13h-13zM5 10h10M6 13c1-8 3-8 4-3s3 4 4-1"/><circle cx="16" cy="10" r="2.500" fill="#eee"/></svg></button>
          <button class="t c28"><svg class="i"><path fill="none" stroke="#eee" d="M3.500 3.500h13v13h-13z"/><circle cx="3" cy="10" r="2.500" fill="#eee"/></svg></button>
        </div>
        <div class="tiles plain"><button class="t"><svg class="i"><use href="#comment"/></svg></button><button class="t"><svg class="i"><use href="#dot"/></svg></button><button class="t"><svg class="i"><use href="#sub"/></svg></button><button class="t"><svg class="i"><use href="#nail"/></svg></button></div>
        <span class="grip"></span>
        <label class="ps" for="pw">Parent size:</label>
        <span class="combo sz"><select id="pw"><option>2048</option></select></span>
        <button class="ib chain act"><svg class="i"><use href="#chain"/></svg></button>
        <span class="combo sz"><select aria-label="Parent height"><option>2048</option></select></span>
        <button class="ib"><svg class="i"><use href="#resetx"/></svg></button>
        <span class="grip g2"></span>
        <label class="stackl"><input type="checkbox" checked>Stack</label>
        <div class="aligns"><button class="ib"><svg class="i"><use href="#a1"/></svg></button><button class="ib"><svg class="i"><use href="#a2"/></svg></button><button class="ib"><svg class="i"><use href="#a3"/></svg></button><button class="ib"><svg class="i"><use href="#a4"/></svg></button><button class="ib"><svg class="i"><use href="#a5"/></svg></button><button class="ib"><svg class="i"><use href="#a6"/></svg></button><button class="ib"><svg class="i"><use href="#a7"/></svg></button><button class="ib"><svg class="i"><use href="#a8"/></svg></button><button class="ib"><svg class="i"><use href="#a9"/></svg></button></div>
      </div>
      <div class="canvas">
        <svg class="nodes">
          <defs>
            <pattern id="gr" width="19.800" height="19.800" x="9.500" y="6" patternUnits="userSpaceOnUse"><path fill="#393939" d="M0 0h19.800v1.800H0zM0 0h1.800v19.800H0z"/></pattern>
            <g id="no"><circle r="4.600" fill="#1c1c1c"/><circle r="3.400" fill="currentColor"/></g>
            <g id="ni"><circle r="4.600" fill="#1c1c1c"/><circle r="3.400" fill="currentColor"/><circle r="1.400" fill="#333"/></g>
          </defs>
          <rect width="100%" height="100%" fill="url(#gr)"/>
          <g fill="none" stroke="#a8a8a8">
            <path stroke="#e0983a" stroke-width="1.300" d="M938 36.500h104"/>
            <path d="M938 135.500h104M938 234.500h104"/>
            <path stroke-width="3" d="M780 452.500h104M938 551.500h104M780 452.500C911 452.500 911 353.500 1042 353.500M780 452.500C832 452.500 832 551.500 884 551.500"/>
            <path stroke="#ffa52e" stroke-width="3" d="M938 452.500h104"/>
          </g>
          <g transform="translate(881 7)"><path fill="#1a1a1a" d="M0 0h59v59H0z"/><path fill="#702c3a" d="M2 2h55v55H2z"/><path fill="#bfbfbf" d="M2 13h54.500v43.500H2z"/><text class="nt" x="29.500" y="9">Uniform color</text><text x="29.500" y="66">2048x2048 - C8</text></g>
          <g transform="translate(1040 7)"><path fill="#1a1a1a" d="M0 0h59v59H0z"/><path fill="#6e6c80" d="M2 2h55v55H2z"/><path fill="#bfbfbf" d="M2 13h54.500v43.500H2z"/><text class="nt" x="29.500" y="9">Base color</text><text x="29.500" y="66">2048x2048 - C8</text></g>
          <g transform="translate(881 106)"><path fill="#1a1a1a" d="M0 0h59v59H0z"/><path fill="#702c3a" d="M2 2h55v11H2z"/><path fill="#000" d="M2 13h55v44H2z"/><text class="nt" x="29.500" y="9">Uniform color</text><text x="29.500" y="66">2048x2048 - L8</text></g>
          <g transform="translate(1040 106)"><path fill="#1a1a1a" d="M0 0h59v59H0z"/><path fill="#6e6c80" d="M2 2h55v11H2z"/><path fill="#000" d="M2 13h55v44H2z"/><text class="nt" x="29.500" y="9">Metalness</text><text x="29.500" y="66">2048x2048 - L8</text></g>
          <g transform="translate(881 205)"><path fill="#1a1a1a" d="M0 0h59v59H0z"/><path fill="#702c3a" d="M2 2h55v11H2z"/><path fill="#404040" d="M2 13h55v44H2z"/><text class="nt" x="29.500" y="9">Uniform color</text><text x="29.500" y="66">2048x2048 - L8</text></g>
          <g transform="translate(1040 205)"><path fill="#1a1a1a" d="M0 0h59v59H0z"/><path fill="#6e6c80" d="M2 2h55v11H2z"/><path fill="#404040" d="M2 13h55v44H2z"/><text class="nt" x="29.500" y="9">Specular roughness</text><text x="29.500" y="66">2048x2048 - L8</text></g>
          <g transform="translate(1040 324)"><text class="tag" x="4" y="-2">(height)</text><path fill="#1a1a1a" d="M0 0h59v59H0z"/><path fill="#6e6c80" d="M2 2h55v11H2z"/><path fill="#808080" d="M2 13h55v44H2z"/><text class="nt" x="29.500" y="9">Height</text><text x="29.500" y="66">2048x2048 - L16</text></g>
          <g transform="translate(723 423)"><path fill="#1a1a1a" d="M0 0h59v59H0z"/><path fill="#702c3a" d="M2 2h55v55H2z"/><path fill="#808080" d="M2 13h54.500v43.500H2z"/><text class="nt" x="29.500" y="9">Uniform color</text><text x="29.500" y="66">2048x2048 - L16</text></g>
          <g transform="translate(881 423)"><path fill="#1a1a1a" d="M0 0h59v59H0z"/><path fill="#84101a" d="M2 2h55v55H2z"/><path fill="#8080ff" d="M2 13h54.500v43.500H2z"/><text class="nt" x="29.500" y="9">Height to normal world ...</text><text x="29.500" y="66">2048x2048 - C16</text></g>
          <g transform="translate(1040 423)"><text class="tag" x="4" y="-2">(normal)</text><path fill="#1a1a1a" d="M0 0h59v59H0z"/><path fill="#6e6c80" d="M2 2h55v11H2z"/><path fill="#8080ff" d="M2 13h55v44H2z"/><text class="nt" x="29.500" y="9">Normal</text><text x="29.500" y="66">2048x2048 - C16</text></g>
          <g transform="translate(881 522)"><path fill="#1a1a1a" d="M0 0h59v59H0z"/><path fill="#84101a" d="M2 2h55v55H2z"/><path fill="#fff" d="M2 13h54.500v43.500H2z"/><text class="nt" x="29.500" y="9">Ambient occlusion (HB...</text></g>
          <g transform="translate(1040 522)"><text class="tag" x="4" y="-2">(ambientOcclusion)</text><path fill="#1a1a1a" d="M0 0h59v59H0z"/><path fill="#6e6c80" d="M2 2h55v11H2z"/><path fill="#fff" d="M2 13h55v44H2z"/><text class="nt" x="29.500" y="9">Ambient occlusion</text></g>
          <g color="#b4b4b4"><use href="#no" x="938" y="135.500"/><use href="#no" x="938" y="234.500"/><use href="#no" x="779.500" y="452.500"/><use href="#no" x="938" y="551.500"/><use href="#ni" x="1042" y="135.500"/><use href="#ni" x="1042" y="234.500"/><use href="#ni" x="1042" y="353.500"/><use href="#ni" x="884" y="452.500"/><use href="#ni" x="884" y="551.500"/><use href="#ni" x="1042" y="551.500"/></g>
          <g color="#ffa52e"><use href="#no" x="938" y="36.500"/><use href="#ni" x="1042" y="36.500"/><use href="#no" x="938" y="452.500"/><use href="#ni" x="1042" y="452.500"/></g>
          <use href="#chk" x="1029" y="-4" width="21" height="21"/><use href="#box" x="1055" y="-4" width="21" height="21"/>
          <use href="#box" x="1029" y="96" width="21" height="21"/><use href="#box" x="1029" y="194" width="21" height="21"/><use href="#box" x="1029" y="313" width="21" height="21"/><use href="#box" x="1029" y="412" width="21" height="21"/><use href="#box" x="1029" y="511" width="21" height="21"/>
        </svg>
      </div>
    </section>

    <div class="views">
      <section class="panel v3d">
        <div class="phead"><svg class="i"><use href="#cube"/></svg><h2>Mat ball - Rasterizer - 3D VIEW</h2><button class="hb"><svg class="i"><use href="#pin"/></svg></button><button class="hb"><svg class="i"><use href="#float"/></svg></button><button class="hb"><svg class="i"><use href="#max"/></svg></button><button class="hb"><svg class="i"><use href="#x"/></svg></button></div>
        <nav class="menu viewmenu"><a href="#">Scene</a><a href="#">Materials</a><a href="#">Lights</a><a href="#">Camera</a><a href="#">Environment</a><a href="#">Display</a><a href="#">Renderer</a></nav>
        <div class="v3body">
          <div class="vtools">
            <span class="hgrip"></span>
            <button class="ib"><svg class="i"><use href="#tree"/></svg></button><hr>
            <button class="ib"><svg class="i"><use href="#cursor"/></svg></button><button class="ib act"><svg class="i"><use href="#video"/></svg></button><button class="ib"><svg class="i"><use href="#env"/></svg></button><button class="ib"><svg class="i"><use href="#bulb"/></svg></button><hr>
            <button class="ib"><svg class="i"><use href="#gear"/></svg></button><button class="ib"><svg class="i"><use href="#curve"/></svg></button><button class="ib"><svg class="i"><use href="#shadow"/></svg></button><button class="ib"><svg class="i"><use href="#ground"/></svg></button><button class="ib"><svg class="i"><use href="#octo"/></svg></button>
            <span class="fill"></span>
            <button class="ib low"><svg class="i"><use href="#plane"/></svg></button><button class="ib low"><svg class="i"><use href="#axis"/></svg></button><button class="ib low"><svg class="i"><use href="#bars"/></svg></button>
          </div>
          <div class="stage">
            <svg class="ball" viewBox="25 -24 1440 1500" role="img" aria-label="Material ball">
              <defs>
                <linearGradient id="dome" x1="0" y1="0" x2="0" y2="1"><stop offset="0" stop-color="#a9b8c6"/><stop offset=".2" stop-color="#bccddb"/><stop offset=".35" stop-color="#d7e2e5"/><stop offset=".6" stop-color="#e0e5df"/><stop offset=".85" stop-color="#cfd1c9"/><stop offset="1" stop-color="#a5a298"/></linearGradient>
                <radialGradient id="edge" gradientUnits="userSpaceOnUse" cx="725" cy="750" r="660"><stop offset=".86" stop-color="#555" stop-opacity="0"/><stop offset="1" stop-color="#5b5848" stop-opacity=".42"/></radialGradient>
                <linearGradient id="band" x1="0" y1="0" x2="0" y2="1"><stop offset="0" stop-color="#97a8ba"/><stop offset=".12" stop-color="#b5c0cd"/><stop offset=".3" stop-color="#dde5e6"/><stop offset=".5" stop-color="#e8f0ee"/><stop offset=".75" stop-color="#dce0d8"/><stop offset="1" stop-color="#a9a79d"/></linearGradient>
                <linearGradient id="bowl" x1="0" y1="0" x2="0" y2="1"><stop offset="0" stop-color="#a7aaa7"/><stop offset=".12" stop-color="#b2c4ce"/><stop offset=".28" stop-color="#c5d0d3"/><stop offset=".5" stop-color="#dadfd9"/><stop offset=".75" stop-color="#c8cac2"/><stop offset=".9" stop-color="#a29e92"/><stop offset="1" stop-color="#8e99a4"/></linearGradient>
                <linearGradient id="torus" x1="0" y1="0" x2=".8" y2="1"><stop offset="0" stop-color="#7e8890"/><stop offset=".2" stop-color="#9fa6af"/><stop offset=".38" stop-color="#c4cdd3"/><stop offset=".55" stop-color="#dfe6e6"/><stop offset=".8" stop-color="#d8dcd7"/><stop offset="1" stop-color="#b2b2a8"/></linearGradient>
                <radialGradient id="spec"><stop offset="0" stop-color="#fff"/><stop offset=".45" stop-color="#fff" stop-opacity=".75"/><stop offset="1" stop-color="#fff" stop-opacity="0"/></radialGradient>
                <linearGradient id="disc" x1="0" y1=".3" x2="1" y2=".5"><stop offset="0" stop-color="#909697"/><stop offset=".3" stop-color="#a8aeb0"/><stop offset=".65" stop-color="#b9c1c2"/><stop offset="1" stop-color="#c4cbcc"/></linearGradient>
                <linearGradient id="discb" x1="0" y1="0" x2="0" y2="1"><stop offset=".6" stop-color="#aaa" stop-opacity="0"/><stop offset="1" stop-color="#b2b2b2" stop-opacity=".8"/></linearGradient>
                <linearGradient id="lip" x1="0" y1="0" x2="0" y2="1"><stop offset="0" stop-color="#b9b8af"/><stop offset=".15" stop-color="#9aa2a8"/><stop offset=".5" stop-color="#edf2ef"/><stop offset=".85" stop-color="#b8c2c8"/><stop offset="1" stop-color="#8a97a2"/></linearGradient>
                <linearGradient id="brown" x1="0" y1="0" x2="1" y2="0"><stop offset="0" stop-color="#b9b9ae"/><stop offset=".6" stop-color="#a09a8a"/><stop offset="1" stop-color="#675a3c"/></linearGradient>
              </defs>
              <path fill="url(#dome)" d="M720 90C1090 100 1380 380 1380 745C1380 1080 1130 1360 800 1395C740 1415 640 1418 545 1390L460 1362L400 1332C200 1210 77 960 77 720C80 600 110 490 152 405L175 403L200 362L192 345C260 250 390 150 500 120C580 92 650 90 720 90Z"/>
              <path fill="url(#edge)" d="M720 90C1090 100 1380 380 1380 745C1380 1080 1130 1360 800 1395L900 1200L1200 750L900 200Z"/>
              <path fill="#b4bdbf" d="M620 98C900 90 1273 400 1273 760C1273 1080 1080 1330 800 1395C740 1415 640 1418 545 1390L460 1362L700 1100L900 400Z"/>
              <path fill="none" stroke="#dbe3e3" stroke-width="3" d="M760 110C1030 170 1273 440 1273 760C1273 1060 1100 1300 850 1388"/>
              <path fill="url(#band)" d="M192 345C260 250 390 150 500 120C560 100 600 96 640 98C960 120 1208 450 1208 780C1208 1080 1040 1320 800 1395C740 1415 640 1418 545 1390L460 1362L700 1100Z"/>
              <path fill="none" stroke="#f2f7f5" stroke-width="4" d="M1100 400C1170 500 1208 640 1208 780C1208 860 1195 930 1175 1000"/>
              <path fill="#adb4b5" d="M192 345C270 230 420 132 570 132C880 132 1115 480 1115 800C1115 1130 900 1395 640 1395C590 1395 520 1382 460 1362L400 1332C200 1210 77 960 77 720C80 600 110 490 152 405L175 403L200 362Z"/>
              <path fill="none" stroke="#eef3f1" stroke-width="3" d="M1050 480C1095 580 1115 690 1115 800C1115 1000 1030 1190 900 1300"/>
              <path fill="url(#bowl)" d="M205 365C290 240 430 162 570 162C860 162 1086 490 1086 790C1086 1110 880 1368 640 1368C330 1368 100 1040 100 720C100 590 140 470 205 365Z"/>
              <path fill="url(#brown)" d="M205 365C290 240 430 162 570 162C630 163 680 176 722 192C660 188 600 196 548 210L350 240Z"/>
              <path fill="#abb4b6" d="M548 210C600 192 660 186 720 192C780 214 830 244 868 280C800 240 720 224 620 218Z"/>
              <path fill="#abb1b4" d="M700 1312C800 1300 900 1240 980 1160C930 1240 880 1282 850 1300C800 1306 760 1312 700 1312Z"/>
              <ellipse cx="551" cy="770" rx="446" ry="569" transform="rotate(-11 551 770)" fill="url(#torus)"/>
              <path fill="none" stroke="#f0f4f2" stroke-width="3" d="M860 370C960 490 1007 640 1007 780C1007 920 960 1050 880 1160"/>
              <ellipse cx="940" cy="780" rx="56" ry="190" fill="url(#spec)" opacity=".6"/>
              <ellipse cx="944" cy="780" rx="18" ry="95" fill="url(#spec)"/>
              <ellipse cx="491" cy="780" rx="394" ry="507" transform="rotate(-12 491 780)" fill="url(#lip)" stroke="#838a8c" stroke-width="4"/>
              <ellipse cx="489" cy="780" rx="384" ry="494" transform="rotate(-12 489 780)" fill="none" stroke="#cfd5d3" stroke-width="6"/>
              <ellipse cx="487" cy="781" rx="376" ry="480" transform="rotate(-12 487 781)" fill="#a6a292"/>
              <ellipse cx="487" cy="781" rx="373" ry="476" transform="rotate(-12 487 781)" fill="url(#disc)"/>
              <ellipse cx="487" cy="781" rx="373" ry="476" transform="rotate(-12 487 781)" fill="url(#discb)"/>
              <path fill="#7d6e4c" d="M390 306C450 286 520 290 565 308C500 300 440 302 390 306Z"/>
              <path fill="none" stroke="#5d6468" stroke-width="3" d="M600 326C760 400 882 600 882 800C882 940 840 1060 770 1140"/>
              <path fill="#7d7e7e" d="M655 1218C685 1210 700 1204 714 1196C695 1216 660 1238 620 1246Z"/>
              <path fill="#e6ecea" d="M1078 582L1142 541L1173 674L1096 662Z"/><path fill="none" stroke="#8f989a" stroke-width="5" d="M1140 545L1172 674L1096 662"/><path fill="none" stroke="#a09c90" stroke-width="3" d="M1058 586L1142 541"/>
              <path fill="none" stroke="#e4e8e6" stroke-width="4" d="M175 405L152 470L120 560M192 345L202 362"/>
              <path fill="none" stroke="#dfe0da" stroke-width="8" d="M402 1332L412 1312"/><path fill="none" stroke="#857f75" stroke-width="5" d="M424 1328L460 1344"/>
            </svg>
            <p class="stats">Samples: 8<br>Render Time: 0.14 s</p>
          </div>
        </div>
        <div class="vfoot"><span class="grip"></span><button class="ib dd"><svg class="i"><use href="#layers"/></svg></button><button class="ib dd"><svg class="i"><use href="#rgb"/></svg></button><span class="combo cs"><select aria-label="Color space"><option>sRGB (default)</option></select></span><div class="prog"></div></div>
      </section>
      <section class="panel v2d">
        <div class="phead"><svg class="i"><use href="#checker"/></svg><h2>Base_color - 2D VIEW</h2><button class="hb"><svg class="i"><use href="#pin"/></svg></button><button class="hb"><svg class="i"><use href="#float"/></svg></button><button class="hb"><svg class="i"><use href="#max"/></svg></button><button class="hb"><svg class="i"><use href="#x"/></svg></button></div>
        <div class="tb wide"><button class="ib"><svg class="i"><use href="#copywin"/></svg></button><button class="ib"><svg class="i"><use href="#save"/></svg></button><button class="ib"><svg class="i"><use href="#copy"/></svg></button><button class="ib dd"><svg class="i"><use href="#viewimg"/></svg></button><button class="ib off uv">UV</button><button class="ib slim off"><svg class="i"><use href="#chev"/></svg></button><button class="ib slim"><svg class="i"><use href="#info"/></svg></button><button class="ib"><svg class="i"><use href="#hist"/></svg></button></div>
        <div class="flat"><div class="tex"></div><p class="dims">2048 x 2048 (RGBA, 8bpc)</p></div>
        <div class="vfoot"><span class="grip"></span><button class="ib dd"><svg class="i"><use href="#rgb"/></svg></button><span class="sw blk"></span><span class="sw bars"></span><button class="ib act"><svg class="i"><use href="#monitor"/></svg></button>
          <div class="zoombar">
            <button class="ib"><svg class="i"><use href="#grid"/></svg></button><button class="ib"><svg class="i"><use href="#person"/></svg></button><button class="ib tiny"><svg class="i"><use href="#fits"/></svg></button><button class="ib tiny"><svg class="i sm"><use href="#one"/></svg></button><span class="sep"></span><button class="ib tiny"><svg class="i"><use href="#minus"/></svg></button><input class="zoomv" type="text" value="27.44%" aria-label="Zoom"><button class="ib tiny"><svg class="i sm"><use href="#plus"/></svg></button><span class="sep"></span><button class="ib act lockb"><svg class="i"><use href="#lock"/></svg></button>
          </div>
        </div>
      </section>
    </div>
  </div>

  <aside class="panel props">
    <div class="phead"><svg class="i"><use href="#doc"/></svg><h2>Substance_graph - PROPERTIES</h2><button class="hb"><svg class="i"><use href="#pin"/></svg></button><button class="hb"><svg class="i"><use href="#float"/></svg></button><button class="hb"><svg class="i"><use href="#max"/></svg></button><button class="hb"><svg class="i"><use href="#x"/></svg></button></div>
    <div class="pbody">
      <h3 class="bar"><svg class="i"><use href="#chevd"/></svg>BASE PARAMETERS</h3>
      <div class="sec"><div class="lab"><h4>Output size</h4><button class="pb dd"><svg class="i"><use href="#inherit"/></svg></button><button class="pb dd"><svg class="i"><use href="#menu"/></svg></button></div>
        <div class="pair"><div>
          <div class="row"><label for="ow">Width</label><input id="ow" class="half" type="range" value="50" style="--v:50%"><output>0</output><span class="note">Parent x 1</span></div>
          <div class="row"><label for="oh">Height</label><input id="oh" class="half" type="range" value="50" style="--v:50%"><output>0</output><span class="note">Parent x 1</span></div>
        </div><button class="ib"><svg class="i"><use href="#unchain"/></svg></button></div>
      </div>
      <div class="sec"><div class="lab"><h4>Output format</h4><button class="pb dd"><svg class="i"><use href="#inherit"/></svg></button><button class="pb dd"><svg class="i"><use href="#menu"/></svg></button></div><span class="combo full"><select disabled aria-label="Output format"><option>8 bits per channel</option></select></span></div>
      <div class="sec"><div class="lab"><h4>Pixel size</h4><button class="pb dd"><svg class="i"><use href="#inherit"/></svg></button><button class="pb dd"><svg class="i"><use href="#menu"/></svg></button></div>
        <div class="row"><label for="xw">Width</label><input id="xw" type="range" value="100" style="--v:100%"><output>1</output></div>
        <div class="row"><label for="xh">Height</label><input id="xh" type="range" value="100" style="--v:100%"><output>1</output></div>
      </div>
      <div class="sec"><div class="lab"><h4>Pixel ratio</h4><button class="pb dd"><svg class="i"><use href="#inherit"/></svg></button><button class="pb dd"><svg class="i"><use href="#menu"/></svg></button></div><span class="combo full"><select disabled aria-label="Pixel ratio"><option>Square</option></select></span></div>
      <div class="sec"><div class="lab"><h4>Tiling mode</h4><button class="pb dd"><svg class="i"><use href="#inherit"/></svg></button><button class="pb dd"><svg class="i"><use href="#menu"/></svg></button></div><span class="combo full"><select disabled aria-label="Tiling mode"><option>H and V tiling</option></select></span></div>
      <div class="sec"><div class="lab"><h4>Random seed</h4><button class="pb"><svg class="i"><use href="#shuffle"/></svg></button><button class="pb dd"><svg class="i"><use href="#inherit"/></svg></button><button class="pb dd"><svg class="i"><use href="#menu"/></svg></button></div>
        <div class="row"><input type="range" value="0" style="--v:0%" aria-label="Random seed"><output>0</output></div>
      </div>
      <h3 class="bar"><svg class="i"><use href="#chevr"/></svg>ATTRIBUTES</h3>
      <h3 class="bar"><svg class="i"><use href="#chevd"/></svg>INPUT PARAMETERS</h3>
      <div class="tabs"><button class="on">Parameters</button><button>Preview</button><button>Presets</button></div>
      <div class="ptools"><button class="pb"><svg class="i"><use href="#plus"/></svg></button><button class="pb dd"><svg class="i"><use href="#menub"/></svg></button></div>
      <h3 class="bar none"><svg class="i"><use href="#chevd"/></svg>INPUTS</h3>
      <h3 class="bar"><svg class="i"><use href="#chevd"/></svg>OUTPUTS</h3>
      <div class="outs">
        <h3 class="bar"><svg class="i"><use href="#chevr"/></svg><span>Material</span><span>|</span><span>Base color</span></h3>
        <h3 class="bar"><svg class="i"><use href="#chevr"/></svg><span>Material</span><span>|</span><span>Metalness</span></h3>
        <h3 class="bar"><svg class="i"><use href="#chevr"/></svg><span>Material</span><span>|</span><span>Specular roughness</span></h3>
        <h3 class="bar"><svg class="i"><use href="#chevr"/></svg><span>Material</span><span>|</span><span>Height</span></h3>
        <h3 class="bar"><svg class="i"><use href="#chevr"/></svg><span>Material</span><span>|</span><span>Normal</span></h3>
        <h3 class="bar"><svg class="i"><use href="#chevr"/></svg><span>Material</span><span>|</span><span>Ambient occlusion</span></h3>
      </div>
      <h3 class="bar none">
        <svg class="i"><use href="#chevd"/></svg>METADATA<button class="pb"><svg class="i"><use href="#plus"/></svg></button></h3>
    </div>
  </aside>
</main>

<footer class="status"><div class="prog"></div><span>Substance Engine: Direct3D 11 (x64)</span><span class="mem">Memory: 0%</span><span class="ver">Version: 16.0.7</span></footer>

<div class="taskbar">
  <button class="tk w1" aria-label="Start"><svg width="32" height="32"><path fill="#0078d7" d="M0 0h15v15H0zM17 0h15v15H17zM0 17h15v15H0zM17 17h15v15H17z"/></svg></button>
  <button class="tk"><svg width="28" height="28"><path fill="#2b2e33" d="M0 0h28v28H0z"/><path fill="#777b80" d="M0 0h28v1H0z"/><path stroke="#666" stroke-width="2" d="M3 10h22M3 18h22"/><path stroke="#3daee9" stroke-width="2" d="M3 10h16M3 18h6"/><circle cx="20" cy="10" r="2.500" fill="#fff"/><circle cx="10" cy="18" r="2.500" fill="#fff"/></svg></button>
  <button class="tk"><svg width="28" height="28"><path fill="#3a4446" d="M0 0h28v28H0z"/><path fill="#2c3134" d="M28 8v20H8z"/><path fill="#7a8284" d="M0 0h28v1H0z"/><path fill="none" stroke="#fff" stroke-width="1.500" d="M11 8l6 6-6 6"/></svg></button>
  <button class="tk"><svg width="30" height="28"><path fill="#2a86b8" d="M1 1h11l3 3h14v10H1z"/><path fill="#fff" d="M2 5h26v8H2z"/><path fill="#46aee2" d="M0 12h10l3-2h17v17H0z"/><path fill="#a8d8f2" d="M5 27c1-7 6-12 15-13l8-1-5 5c0 3 1 5 3 6-4-1-6-1-8-3-5 0-6 3-7 6z"/></svg></button>
  <button class="tk lit edge"><svg width="40" height="34" viewBox="-3 0 40 34"><defs><linearGradient id="eg" x1="0" y1="0" x2="1" y2="1"><stop offset="0" stop-color="#2bb7e8"/><stop offset=".6" stop-color="#28c6b0"/><stop offset="1" stop-color="#6fe058"/></linearGradient></defs><circle cx="17" cy="18" r="16" fill="#0c6cc4"/><path fill="url(#eg)" d="M1 17C2 7 9 2 17 2c9 0 16 6 16 13 0 5-4 8-8 8-3 0-6-1-6-3 3-3 1-8-4-9C8 10 2 12 1 17z"/><path fill="#1b9de2" d="M1 17c2-6 10-8 14-6-5 1-7 6-5 12s6 10 10 11C9 36 0 28 1 17z"/><path fill="#0a4f96" d="M19 20c0 2 3 4 7 4s5-2 6-1c-2 6-7 10-12 11-5-1-9-5-10-11 0-4 3-6 5-6s4 1 4 3z"/><path fill="#fff" d="M26 5h3l4-4v11l-4-4h-3z"/><path fill="none" stroke="#fff" d="M34 3c2 2 2 5 0 7M35 1c3 3 3 8 0 11"/></svg></button>
  <button class="tk mid60"><svg width="32" height="32"><circle cx="16" cy="16" r="16" fill="#fff"/><path fill="#101010" d="M13 8h6l-3 8h-5l-2 4h5l-1 3H7zM16 11h5l-2 4h4l-5 9h-6l2-4h3l2-5h-4z"/></svg></button>
  <button class="tk lit"><svg width="24" height="30"><path fill="#c8c8f0" stroke="#222" d="M2 12C2 5 7 1 12 1s10 4 10 11l-6 6H8z"/><path stroke="#5a5aa0" d="M12 1v17M7 3l3 14M17 3l-3 14M3 8l6 9M21 8l-6 9"/><path fill="#a47848" stroke="#3a2614" d="M3 17l9 3 9-3v8l-9 4-9-4z"/><path fill="#c89a64" d="M2 15l5-1 5 5-5 2zM22 15l-5-1-5 5 5 2z"/></svg></button>
  <button class="tk on"><svg width="30" height="30" viewBox="0 0 30 30"><rect width="30" height="30" rx="5" fill="#032d14"/><text x="15" y="19" text-anchor="middle" class="ds-l">Ds</text></svg></button>
  <div class="tray">
    <svg viewBox="0 0 22 22"><path fill="#12a04a" d="M11 0l9 3v9c0 5-5 8-9 10-4-2-9-5-9-10V3z"/><path fill="none" stroke="#fff" stroke-width="2" d="M6 11l4 4 6-8"/></svg>
    <svg viewBox="0 0 22 22"><rect x="2" y="2" width="18" height="18" rx="4" fill="#f0f0f0"/><g fill="none" stroke="#444" stroke-width=".8"><ellipse cx="11" cy="11" rx="3.500" ry="6.500"/><ellipse cx="11" cy="11" rx="3.500" ry="6.500" transform="rotate(60 11 11)"/><ellipse cx="11" cy="11" rx="3.500" ry="6.500" transform="rotate(120 11 11)"/></g></svg>
    <svg viewBox="0 0 22 22"><path stroke="#f0f0f0" stroke-width="1.600" d="M11 1v20M1 11h20M6 2l10 18M16 2L6 20M2 6l18 10M2 16L20 6"/></svg>
    <svg viewBox="0 0 22 22"><g fill="none" stroke-width="4"><path stroke="#f33" d="M5 5a7 7 0 0 1 6-3"/><path stroke="#fe0" d="M10 2a7 7 0 0 1 6 3"/><path stroke="#3f3" d="M16 5a7 7 0 0 1 1 6"/><path stroke="#0cf" d="M17 10a7 7 0 0 1-4 5"/><path stroke="#33f" d="M12 15a7 7 0 0 1-6-4"/><path stroke="#f0f" d="M5 11a7 7 0 0 1 0-6"/></g><path fill="#111" d="M9 7h4v8h1v4l-2 3h-2l-2-3v-4h1z"/></svg>
    <svg viewBox="0 0 22 22"><path fill="none" stroke="#fff" stroke-width="1.500" d="M9 17L2 12c-1-3 1-5 3-3l4 7M9 16L5 6c1-3 3-3 4-1l1 9M10 14V4c2-3 4-1 4 1l-2 7M15 8c3-1 4 1 3 3"/><circle cx="15" cy="15" r="5" fill="#fff"/><path stroke="#333" stroke-width="1.500" d="M15 12v5M13 15l2 3 2-3"/></svg>
    <svg viewBox="0 0 22 22"><path fill="none" stroke="#19a8a8" stroke-width="4" d="M16 4H9l-5 7 5 7h3"/><circle cx="15" cy="15" r="5.500" fill="#20c4c8"/><path fill="none" stroke="#123" stroke-width="1.500" d="M12 15l2 2 4-4"/></svg>
    <svg viewBox="0 0 22 22"><circle cx="11" cy="11" r="7.500" fill="none" stroke="#fff"/><path fill="#fff" d="M9 7l6 4-6 4z"/></svg>
    <svg viewBox="0 0 22 22"><path fill="none" stroke="#fff" d="M4.500 5.500h13v13h-13zM7 10.500h8M7 12.500h8M7 15.500h5"/><path fill="#fff" d="M4 5h3V3h8v2h3v3H4z"/></svg>
    <svg viewBox="0 0 22 22"><path fill="none" stroke="#fff" d="M8 4.500h10.500v10H8M3.500 3.500h4v5h-4zM5.500 9v8.500H9M9 17.500h8M13 15v2"/></svg>
    <svg viewBox="0 0 22 22"><circle cx="11" cy="11" r="3.500" fill="none" stroke="#fff"/><path fill="#fff" d="M11 7a4 4 0 0 1 0 8z"/><path stroke="#fff" d="M11 3v3M11 16v3M3 11h3M16 11h3M5 5l2 2M15 15l2 2M17 5l-2 2M7 15l-2 2"/></svg>
    <svg viewBox="0 0 22 22"><path fill="#fff" d="M3 8h3v6H3zM7 8l5-5v16l-5-5z"/><path fill="none" stroke="#fff" d="M14 8c2 2 2 4 0 6M15 5c4 3 4 9 0 12"/></svg>
    <svg viewBox="0 0 22 22"><path fill="none" stroke="#fff" d="M3 15l8-8 8 8"/></svg>
  </div>
  <div class="clock"><time class="hm">10:37</time><time class="dt">15.10.2026</time></div>
  <button class="desk" aria-label="Show desktop"></button>
</div>
</body>
</html>
```
FILE: styles.css
```css
* { box-sizing: border-box; }
html, body { margin: 0; height: 100%; }
body { display: flex; flex-direction: column; min-height: 100vh; overflow: hidden; background: #333; color: #c0c0c0; font: 11px/14px "DejaVu Sans Condensed", "DejaVu Sans", sans-serif; }
button, input, select { font: inherit; color: inherit; margin: 0; padding: 0; border: 0; background: none; outline: 0; }
h1, h2, h3, h4, p, ul { margin: 0; padding: 0; font-weight: normal; list-style: none; }
a { color: inherit; text-decoration: none; }
.sprite { position: absolute; width: 0; height: 0; }
svg { display: block; flex: none; }
.i { width: 20px; height: 20px; color: #cacaca; }
.i.sm { width: 16px; height: 16px; }
.fill { flex: 1; }

/* window chrome */
.titlebar { display: flex; align-items: center; height: 24px; flex: none; background: #292c31; padding-left: 8px; }
.applogo { width: 18px; height: 18px; margin-right: 8px; }
.ds-s { font: bold 8px "Noto Sans", sans-serif; fill: #35d06a; }
.titlebar h1 { font: 13px/18px "Noto Sans", sans-serif; color: #e8e8e8; flex: 1; }
.winbtns { display: flex; }
.winbtns button { width: 48px; display: flex; justify-content: center; }
.menu { display: flex; align-items: center; gap: 20px; flex: none; padding: 1px 10px 0; height: 22px; }
.appmenu { height: 24px; }
.viewmenu { gap: 19px; }
.maintools { display: flex; align-items: center; height: 27px; flex: none; padding-bottom: 1px; }

.ib { position: relative; display: flex; align-items: center; justify-content: center; width: 26px; height: 24px; flex: none; border-radius: 3px; }
.maintools .ib { width: 29px; }
.maintools .slim { width: 20px; }
.maintools .narrow { width: 26px; }
.ib.act { background: #575757; }
.off { opacity: .3; }
.dd::after { content: ""; position: absolute; right: 2px; bottom: 5px; width: 5px; height: 5px; border: solid #b0b0b0; border-width: 0 1px 1px 0; transform: rotate(45deg); }

.work { flex: 1; min-height: 0; display: flex; border-top: 1px solid #000; }
.panel { display: flex; flex-direction: column; min-width: 0; min-height: 0; }
.phead { display: flex; align-items: center; height: 24px; flex: none; background: #2a2a2a; padding: 0 0 0 4px; }
.phead h2 { flex: 1; margin-left: 5px; padding-top: 1px; font: bold 12px/16px "DejaVu Sans Condensed", "DejaVu Sans", sans-serif; color: #dcdcdc; }
.hb { width: 25px; display: flex; justify-content: center; }
.tb { display: flex; align-items: center; gap: 2px; height: 26px; flex: none; background: #333; padding-left: 1px; }
.wide { gap: 3px; }
.grip { width: 5px; height: 24px; flex: none; margin: 0 5px; background: repeating-linear-gradient(90deg, #151515 0 1px, #333 1px 2px); }
.prog { width: 128px; height: 15px; background: #4d4d4d; flex: none; }

/* left column */
.left { width: 368px; flex: none; display: flex; flex-direction: column; border-right: 2px solid #151515; }
.explorer { flex: 645 1 0; }
.library { flex: 643 1 0; }
.pkgtree { flex: 1; background: #262626; color: #ddd; }
.pkg { display: flex; align-items: center; height: 27px; }
.pkg .big { margin: 0 10px 0 5px; }
.pkg em { font-weight: bold; font-size: 11px; color: #c8c8c8; }
.child { display: flex; align-items: center; padding: 0 2px 0 20px; }
.sel { flex: 1; display: flex; align-items: center; gap: 7px; height: 25px; padding-left: 5px; border: 1px solid #1b84f0; border-radius: 3px; background: #3f3f3f; color: #eee; }
.foot { height: 31px; border-top: 1px solid #111; border-bottom: 1px solid #111; padding-left: 2px; gap: 7px; }
.libcols { flex: 1; min-height: 0; display: flex; }
.libnav { width: 119px; display: flex; flex-direction: column; }
.libcols .tb { height: 28px; border-bottom: 1px solid #000; }
.listwrap { flex: 1; min-height: 0; display: flex; overflow: hidden; background: #222; }
.listwrap ul { width: 110px; flex: none; }
.listwrap li { display: flex; align-items: center; height: 22px; gap: 4px; padding: 1px 0 0 2px; background: #333; border-bottom: 1px solid #292929; color: #bbb; }
.listwrap li span { white-space: nowrap; }
.listwrap li.on { padding: 1px 0 0 1px; border: 1px solid #1b84f0; border-radius: 2px; background: #444; color: #fff; }
.listwrap li.cat { font-weight: bold; font-size: 12px; color: #fff; }
.listwrap li.s { padding-left: 22px; border-image: linear-gradient(90deg, #333 20px, #292929 20px) 1; }
.vscroll { flex: 1; padding: 1px 0 0 1px; }
.vscroll i { display: block; width: 8px; height: 196px; background: #444; }
.splitter { width: 9px; background: #222; border: solid #333; border-width: 0 3px 0 4px; }
.libmain { flex: 1; display: flex; flex-direction: column; min-width: 0; }
.libmain .tb { padding-right: 2px; }
.libmain .grip { margin: 0 5px 0 4px; }
.search { width: 100px; height: 18px; padding: 0 7px; border: 1px solid #4c4c4c; border-radius: 3px; background: #262626; }
.search::placeholder { color: #808080; opacity: 1; }
.end { margin-left: auto; }
.search + .ib { margin-left: 2px; }
.libempty { flex: 1; background: #262626; }
.libfoot { height: 20px; flex: none; display: flex; align-items: center; justify-content: flex-end; padding-right: 2px; border-top: 1px solid #151515; }

/* graph */
.mid { flex: 1; min-width: 0; display: flex; flex-direction: column; }
.graphp { flex: 643 1 0; border-bottom: 1px solid #111; }
.nodesbar { height: 27px; gap: 0; border-bottom: 1px solid #000; }
.tiles { display: flex; gap: 1px; }
.plain { margin-left: 3px; }
.t { width: 24px; height: 24px; display: flex; align-items: center; justify-content: center; }
.c1 { background: #6f4a63; } .c2 { background: #c6c6c6; } .c3 { background: #8f8a70; } .c4 { background: #473d30; }
.c5 { background: #55801a; } .c6 { background: #655b35; } .c7 { background: #33666e; } .c8 { background: #a6c663; }
.c9 { background: #6f6090; } .c10 { background: #262626; } .c11 { background: #1f2c14; } .c12 { background: #3d5f20; }
.c13 { background: #858585; } .c14 { background: #65834f; } .c15 { background: #82ab80; } .c16 { background: #8080ff; }
.c17, .c23 { background: #0a0a0a; } .c18 { background: #8b6a80; } .c19 { background: #c2a562; } .c21 { background: #53669a; }
.c20 { background: #a58799; color: #fff; font-size: 18px; }
.c22 { background: #843644; } .c24 { background: #558080; } .c25 { background: #a29fb4; } .c28 { background: #807e98; }
.t01 { font-size: 9px; fill: #ccc; }
.ps { margin: 0 4px 0 1px; }
.combo { position: relative; display: flex; }
.combo::after { content: ""; position: absolute; right: 6px; top: 4px; width: 6px; height: 6px; border: solid #999; border-width: 0 1px 1px 0; transform: rotate(45deg); pointer-events: none; }
.combo select { appearance: none; width: 100%; height: 18px; padding: 0 4px; border: 1px solid #4c4c4c; border-radius: 3px; background: #2d2d2d; color: #d0d0d0; }
.sz { width: 46px; }
.chain { width: 19px; margin: 0 4px; }
.sz + .ib:not(.chain) { margin-left: 2px; }
.g2 { margin: 0 7px 0 8px; }
.stackl { display: flex; align-items: center; gap: 5px; margin-right: 3px; }
.stackl input { appearance: none; width: 13px; height: 13px; border-radius: 2px; background: #b8b8b8; display: grid; place-items: center; }
.stackl input::after { content: ""; width: 4px; height: 8px; border: solid #222; border-width: 0 2px 2px 0; transform: rotate(45deg) translate(-1px, -1px); }
.aligns { display: flex; gap: 2px; }
.canvas { flex: 1; position: relative; overflow: hidden; background: #404040; }
.nodes { position: absolute; inset: 0; width: 100%; height: 100%; }
.nodes text { font: bold 7px "Open Sans", sans-serif; fill: #d8d8d8; text-anchor: middle; }
.nodes .nt { font-size: 4px; fill: #fff; }
.nodes .tag { font: italic 5px "Open Sans", sans-serif; fill: #999; text-anchor: start; }

/* 3D and 2D views */
.views { flex: 645 1 0; min-height: 0; display: flex; gap: 3px; background: #111; }
.views .panel { flex: 1 1 0; background: #333; }
.views .phead { height: 25px; }
.v3body { flex: 1; min-height: 0; display: flex; }
.vtools { width: 29px; display: flex; flex-direction: column; align-items: center; padding: 7px 0 1px; border-right: 2px solid #2c2c2c; }
.vtools .ib { height: 25px; width: 27px; }
.vtools .low { height: 24px; }
.hgrip { width: 27px; height: 5px; margin-bottom: 5px; flex: none; background: repeating-linear-gradient(#151515 0 1px, #333 1px 2px); }
.vtools hr { width: 27px; margin: 0 0 1px; border: 0; border-top: 1px solid #262626; }
.stage { flex: 1; display: flex; align-items: center; justify-content: center; position: relative; background: #202020; }
.ball { width: 480px; height: 500px; }
.stats { position: absolute; right: 9px; bottom: 8px; line-height: 13px; text-align: right; color: #d0d0d0; }
.vfoot { height: 27px; flex: none; display: flex; align-items: center; gap: 2px; border-bottom: 1px solid #111; }
.vfoot .prog { margin-left: auto; width: 87px; margin-right: 2px; }
.vfoot .grip { margin-right: 2px; }
.vfoot .ib + .ib { margin-left: 1px; }
.cs { width: 123px; }
.v2d .tb { padding-left: 1px; }
.v2d .tb .slim { width: 16px; }
.v2d .tb .uv { width: 24px; }
.flat { flex: 1; min-height: 0; position: relative; display: flex; justify-content: center; padding: 1px 4px 3px 0; background: #202020; }
.tex { height: 100%; aspect-ratio: 1; background: #bfbfbf; border: solid #000; border-width: 1px 0 0 1px; }
.dims { position: absolute; left: 4px; bottom: 1px; color: #d0d0d0; }
.sw { width: 16px; height: 16px; margin-right: 5px; }
.blk { background: #000; }
.bars { background: repeating-linear-gradient(90deg, #6a6a6a 0 5px, #555 5px 6px); }
.zoombar { display: flex; align-items: center; margin-left: auto; }
.zoombar .ib { width: 28px; margin: 0; }
.zoombar .tiny, .zoombar .lockb { width: 19px; }
.sep { width: 1px; height: 24px; margin: 0 4px; background: #262626; }
.zoomv { width: 77px; height: 20px; padding: 0 4px; text-align: right; border: 1px solid #555; border-radius: 3px; background: #262626; color: #e0e0e0; }
.vfoot .lockb { margin-right: 1px; }

/* properties */
.props { width: 368px; flex: none; border-left: 3px solid #1a1a1a; }
.pbody { margin-right: 10px; border-right: 1px solid #2a2a2a; }
.bar { display: flex; align-items: center; gap: 6px; height: 25px; padding: 2px 0 0 3px; border-bottom: 1px solid #292929; background: #4c4c4c; font-weight: bold; font-size: 12px; color: #e0e0e0; }
.none > .i { opacity: .4; }
.bar .pb { margin-left: auto; }
.bar .i { margin-bottom: 2px; }
.outs { padding-left: 12px; background: repeating-linear-gradient(90deg, #1c1c1c 0 1px, #333 1px 2px); }
.outs .bar { padding-left: 2px; }
.sec { padding: 0 3px 5px 16px; border-bottom: 1px solid #292929; }
.lab { display: flex; align-items: center; gap: 1px; height: 27px; }
.lab h4 { flex: 1; padding-top: 1px; font-weight: bold; color: #cacaca; }
.pb { position: relative; width: 28px; height: 20px; display: flex; align-items: center; justify-content: center; }
.pair { display: flex; align-items: center; }
.pair .ib { margin-left: auto; width: 22px; }
.row { display: flex; align-items: center; height: 24px; padding-left: 1px; }
.row label { width: 41px; }
.row input { flex: none; appearance: none; width: 211px; height: 12px; background: linear-gradient(90deg, #b4b4b4 var(--v), #484848 var(--v)) center / 100% 2px no-repeat; }
.row input:first-child { width: 248px; margin-right: 4px; }
.row .half { width: 104px; }
.row input::-webkit-slider-thumb { appearance: none; width: 12px; height: 12px; border: 2px solid #bcbcbc; border-radius: 50%; background: #333; box-shadow: 0 0 0 2px #333; }
.row output { width: 66px; text-align: right; color: #ddd; }
.row .half + output { width: 71px; }
.note { margin-left: 20px; }
.sec .full { margin: 1px 1px 3px; }
.full select { border-color: #3c3c3c; background: #3c3c3c; color: #7a7a7a; opacity: 1; }
.full::after { border-color: #666; }
.tabs { display: grid; grid-template-columns: 118px 1fr 1fr; height: 21px; background: #1b1b1b; }
.tabs .on { background: #333; border-top: 2px solid #1b84f0; color: #eee; }
.ptools { display: flex; justify-content: flex-end; align-items: center; height: 25px; border-bottom: 1px solid #292929; }

/* status and taskbar */
.status { display: flex; align-items: center; height: 26px; flex: none; padding: 1px 8px 0 0; border-top: 1px solid #111; justify-content: flex-end; }
.status span { margin-left: 5px; }
.status .mem { margin-left: 3px; }
.status .ver { margin-left: 26px; }
.taskbar { display: flex; align-items: center; height: 50px; flex: none; background: #464a53; }
.tk { width: 58px; height: 50px; display: flex; align-items: center; justify-content: center; }
.tk.w1 { width: 60px; padding-left: 10px; }
.tk.lit { background: #555860; width: 56px; }
.tk.edge { margin-left: 1px; }
.tk.mid60 { width: 59px; }
.tk.on { width: 56px; margin-left: 2px; background: #43708c; border-top: 3px solid #3a9cd8; }
.ds-l { font: bold 14px "Noto Sans", sans-serif; fill: #2ee06c; }
.tray { margin-left: auto; display: flex; gap: 8px; }
.tray svg { width: 22px; height: 22px; }
.clock { display: flex; flex-direction: column; align-items: center; margin: 0 14px 0 7px; width: 96px; color: #fff; font-family: "Noto Sans", sans-serif; }
.hm { font-size: 24px; line-height: 24px; }
.dt { font-size: 19px; line-height: 19px; }
.desk { width: 24px; height: 24px; margin-right: 18px; border: 1px solid #fff; background: linear-gradient(#fff, #fff) center 19px / 18px 1px no-repeat; }
```
